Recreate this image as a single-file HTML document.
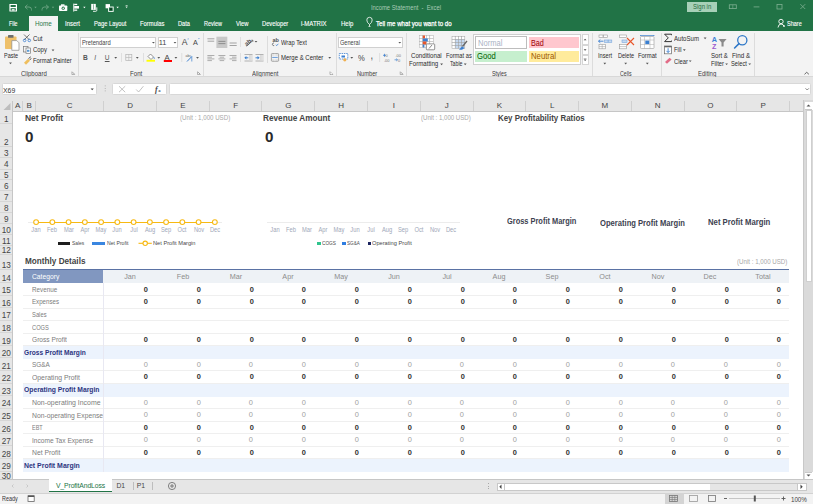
<!DOCTYPE html><html><head><meta charset="utf-8"><style>
*{margin:0;padding:0;box-sizing:border-box}
html,body{width:813px;height:504px;overflow:hidden;background:#fff;font-family:"Liberation Sans",sans-serif}
.ab{position:absolute}
.t{position:absolute;white-space:nowrap;line-height:1}
svg{position:absolute;overflow:visible}
</style></head><body>
<div class="ab" style="left:0px;top:0px;width:813px;height:31px;background:#217346"></div>
<div class="ab" style="left:29px;top:16px;width:29.2px;height:15px;background:#f3f3f3"></div>
<div class="t" style="left:8.80px;top:21.06px;font-size:6.9px;color:#ffffff;transform:scaleX(0.773);transform-origin:0 0;-webkit-text-stroke:0.12px #fff;">File</div>
<div class="t" style="left:34.90px;top:21.06px;font-size:6.9px;color:#2a7a4d;transform:scaleX(0.918);transform-origin:0 0;">Home</div>
<div class="t" style="left:64.80px;top:21.06px;font-size:6.9px;color:#ffffff;transform:scaleX(0.864);transform-origin:0 0;-webkit-text-stroke:0.12px #fff;">Insert</div>
<div class="t" style="left:93.90px;top:21.06px;font-size:6.9px;color:#ffffff;transform:scaleX(0.834);transform-origin:0 0;-webkit-text-stroke:0.12px #fff;">Page Layout</div>
<div class="t" style="left:139.60px;top:21.06px;font-size:6.9px;color:#ffffff;transform:scaleX(0.849);transform-origin:0 0;-webkit-text-stroke:0.12px #fff;">Formulas</div>
<div class="t" style="left:177.80px;top:21.06px;font-size:6.9px;color:#ffffff;transform:scaleX(0.823);transform-origin:0 0;-webkit-text-stroke:0.12px #fff;">Data</div>
<div class="t" style="left:203.60px;top:21.06px;font-size:6.9px;color:#ffffff;transform:scaleX(0.799);transform-origin:0 0;-webkit-text-stroke:0.12px #fff;">Review</div>
<div class="t" style="left:235.50px;top:21.06px;font-size:6.9px;color:#ffffff;transform:scaleX(0.842);transform-origin:0 0;-webkit-text-stroke:0.12px #fff;">View</div>
<div class="t" style="left:262.00px;top:21.06px;font-size:6.9px;color:#ffffff;transform:scaleX(0.836);transform-origin:0 0;-webkit-text-stroke:0.12px #fff;">Developer</div>
<div class="t" style="left:301.30px;top:21.06px;font-size:6.9px;color:#ffffff;transform:scaleX(0.871);transform-origin:0 0;-webkit-text-stroke:0.12px #fff;">i-MATRIX</div>
<div class="t" style="left:340.70px;top:21.06px;font-size:6.9px;color:#ffffff;transform:scaleX(0.866);transform-origin:0 0;-webkit-text-stroke:0.12px #fff;">Help</div>
<div class="t" style="left:375.60px;top:21.06px;font-size:6.9px;color:#ffffff;transform:scaleX(0.890);transform-origin:0 0;-webkit-text-stroke:0.25px #fff;">Tell me what you want to do</div>
<div class="t" style="left:787.20px;top:21.16px;font-size:6.9px;color:#ffffff;transform:scaleX(0.799);transform-origin:0 0;-webkit-text-stroke:0.12px #fff;">Share</div>
<div class="t" style="left:370.60px;top:4.56px;font-size:6.9px;color:#a8cbb6;transform:scaleX(0.846);transform-origin:0 0;">Income Statement&nbsp;&nbsp;-&nbsp;&nbsp;Excel</div>
<div class="ab" style="left:687.4px;top:2px;width:29.4px;height:9.8px;background:#a7d0b8"></div>
<div class="t" style="left:692.80px;top:4.26px;font-size:6.9px;color:#1f6b40;transform:scaleX(0.867);transform-origin:0 0;">Sign in</div>
<svg style="left:0;top:0" width="813" height="32"><rect x="9.4" y="3.9" width="7.6" height="7.6" rx="0.5" fill="#fff"/><rect x="10.6" y="5" width="5.2" height="2" fill="#217346"/><rect x="10.6" y="8.2" width="5.2" height="2.4" fill="#217346"/><rect x="11.8" y="9.2" width="2.8" height="1.4" fill="#fff"/><path d="M25,7 L27.5,4.8 M25,7 L27.5,9.2 M25,7 H29 Q31.5,7 31.5,9.5 V10.5" fill="none" stroke="#6fa686" stroke-width="0.9"/><polygon points="34.3,6.8 36.7,6.8 35.5,8.3" fill="#6fa686"/><path d="M48.5,7 L46,4.8 M48.5,7 L46,9.2 M48.5,7 H44.5 Q42,7 42,9.5 V10.5" fill="none" stroke="#6fa686" stroke-width="0.9"/><polygon points="51.8,6.8 54.2,6.8 53,8.3" fill="#6fa686"/><rect x="59" y="5.5" width="8.3" height="5.5" rx="0.8" fill="#fff"/><rect x="61" y="4.3" width="3.5" height="1.6" fill="#fff"/><circle cx="63.2" cy="8.2" r="1.6" fill="#217346"/><circle cx="63.2" cy="8.2" r="0.8" fill="#fff"/><rect x="73.3" y="3.6" width="0.9" height="8" fill="#fff"/><rect x="74.2" y="3.8" width="3" height="1.3" fill="#fff"/><rect x="74.2" y="6" width="4.8" height="2.6" fill="#fff"/><rect x="74.2" y="9.5" width="3" height="1.3" fill="#fff"/><polygon points="83.2,6.8 85.6,6.8 84.4,8.3" fill="#fff"/><rect x="91.2" y="3.9" width="4.6" height="6" fill="#fff"/><line x1="93.5" y1="4.3" x2="93.5" y2="9.5" stroke="#217346" stroke-width="0.5"/><path d="M96.8,7.3 V10.3 Q96.8,11.3 95.8,11.3 H93" fill="none" stroke="#fff" stroke-width="0.9"/><rect x="105.6" y="4.1" width="4.4" height="4.2" fill="#fff"/><rect x="108.6" y="7" width="4.6" height="4.4" fill="#217346" stroke="#fff" stroke-width="0.9"/><rect x="109.8" y="8.2" width="2.2" height="2" fill="#0b3d20"/><polygon points="116.4,6.8 118.8,6.8 117.6,8.3" fill="#fff"/><rect x="125.6" y="5.2" width="2" height="0.7" fill="#d8e9de"/><polygon points="125.4,6.6 127.8,6.6 126.6,8.3" fill="#d8e9de"/><rect x="729.3" y="4.8" width="7" height="3.8" fill="none" stroke="#7fb092" stroke-width="0.8"/><line x1="732.8" y1="4.8" x2="732.8" y2="8.6" stroke="#7fb092" stroke-width="0.6"/><line x1="753.6" y1="6.9" x2="759.4" y2="6.9" stroke="#7fb092" stroke-width="0.8"/><rect x="777" y="4.4" width="5" height="4.6" fill="none" stroke="#7fb092" stroke-width="0.8"/><path d="M800.4,4.2 L805.2,9 M805.2,4.2 L800.4,9" stroke="#7fb092" stroke-width="0.8"/><path d="M369.5,26 V24.5 Q366.8,22.5 366.8,20 A2.7,2.7 0 0 1 372.2,20 Q372.2,22.5 369.5,24.5" fill="none" stroke="#fff" stroke-width="0.8"/><line x1="368.5" y1="26.5" x2="370.5" y2="26.5" stroke="#fff" stroke-width="0.7"/><circle cx="781" cy="21.5" r="2.2" fill="none" stroke="#fff" stroke-width="0.9"/><path d="M778,27.5 Q778.5,24 781,24 Q783.5,24 784,26.5" fill="none" stroke="#fff" stroke-width="0.9"/><path d="M783,26 H785 M784,25 V27" stroke="#fff" stroke-width="0.7"/></svg>
<div class="ab" style="left:0px;top:31px;width:813px;height:46px;background:#f3f3f3"></div>
<div class="ab" style="left:0px;top:76.4px;width:813px;height:0.8px;background:#d8d8d8"></div>
<div class="ab" style="left:77.5px;top:33px;width:0.8px;height:43px;background:#dcdcdc"></div>
<div class="ab" style="left:203px;top:33px;width:0.8px;height:43px;background:#dcdcdc"></div>
<div class="ab" style="left:335.5px;top:33px;width:0.8px;height:43px;background:#dcdcdc"></div>
<div class="ab" style="left:406.4px;top:33px;width:0.8px;height:43px;background:#dcdcdc"></div>
<div class="ab" style="left:592.4px;top:33px;width:0.8px;height:43px;background:#dcdcdc"></div>
<div class="ab" style="left:660.7px;top:33px;width:0.8px;height:43px;background:#dcdcdc"></div>
<div class="ab" style="left:754.4px;top:33px;width:0.8px;height:43px;background:#dcdcdc"></div>
<div class="ab" style="left:267.3px;top:36px;width:0.7px;height:27px;background:#dcdcdc"></div>
<div class="t" style="left:20.80px;top:70.96px;font-size:6.9px;color:#3a3a3a;transform:scaleX(0.874);transform-origin:0 0;">Clipboard</div>
<div class="t" style="left:130.00px;top:70.96px;font-size:6.9px;color:#3a3a3a;transform:scaleX(0.891);transform-origin:0 0;">Font</div>
<div class="t" style="left:252.00px;top:70.96px;font-size:6.9px;color:#3a3a3a;transform:scaleX(0.860);transform-origin:0 0;">Alignment</div>
<div class="t" style="left:356.80px;top:70.96px;font-size:6.9px;color:#3a3a3a;transform:scaleX(0.827);transform-origin:0 0;">Number</div>
<div class="t" style="left:491.50px;top:70.96px;font-size:6.9px;color:#3a3a3a;transform:scaleX(0.783);transform-origin:0 0;">Styles</div>
<div class="t" style="left:620.20px;top:70.96px;font-size:6.9px;color:#3a3a3a;transform:scaleX(0.756);transform-origin:0 0;">Cells</div>
<div class="t" style="left:698.20px;top:70.96px;font-size:6.9px;color:#3a3a3a;transform:scaleX(0.867);transform-origin:0 0;">Editing</div>
<div class="t" style="left:4.00px;top:52.76px;font-size:6.9px;color:#2b2b2b;transform:scaleX(0.793);transform-origin:0 0;">Paste</div>
<div class="t" style="left:32.70px;top:35.66px;font-size:6.9px;color:#2b2b2b;transform:scaleX(0.885);transform-origin:0 0;">Cut</div>
<div class="t" style="left:32.70px;top:46.56px;font-size:6.9px;color:#2b2b2b;transform:scaleX(0.863);transform-origin:0 0;">Copy</div>
<div class="t" style="left:32.70px;top:58.26px;font-size:6.9px;color:#2b2b2b;transform:scaleX(0.848);transform-origin:0 0;">Format Painter</div>
<div class="ab" style="left:80px;top:37px;width:76.4px;height:11px;background:#fff;border:0.8px solid #d0d0d0"></div>
<div class="ab" style="left:157.7px;top:37px;width:20.5px;height:11px;background:#fff;border:0.8px solid #d0d0d0"></div>
<div class="t" style="left:81.50px;top:39.76px;font-size:6.9px;color:#444;transform:scaleX(0.841);transform-origin:0 0;">Pretendard</div>
<div class="t" style="left:158.80px;top:39.34px;font-size:7.4px;color:#444;">11</div>
<div class="ab" style="left:338.4px;top:37px;width:65px;height:11px;background:#fff;border:0.8px solid #d0d0d0"></div>
<div class="t" style="left:339.90px;top:39.76px;font-size:6.9px;color:#444;transform:scaleX(0.811);transform-origin:0 0;">General</div>
<div class="t" style="left:82.90px;top:55.01px;font-size:6.6px;color:#555;font-weight:bold;">B</div>
<div class="t" style="left:94.30px;top:55.01px;font-size:6.6px;color:#555;font-style:italic;">I</div>
<div class="t" style="left:104.80px;top:55.01px;font-size:6.6px;color:#555;text-decoration:underline;">U</div>
<div class="t" style="left:357.60px;top:54.01px;font-size:9.2px;color:#444;transform:scaleX(0.830);transform-origin:0 0;">%</div>
<div class="t" style="left:370.60px;top:52.48px;font-size:9px;color:#444;font-weight:bold;transform:scaleX(0.641);transform-origin:0 0;">,</div>
<div class="t" style="left:280.90px;top:39.86px;font-size:6.9px;color:#2b2b2b;transform:scaleX(0.837);transform-origin:0 0;">Wrap Text</div>
<div class="t" style="left:280.90px;top:55.26px;font-size:6.9px;color:#2b2b2b;transform:scaleX(0.870);transform-origin:0 0;">Merge &amp; Center</div>
<div class="t" style="left:410.90px;top:52.76px;font-size:6.9px;color:#2b2b2b;transform:scaleX(0.889);transform-origin:0 0;">Conditional</div>
<div class="t" style="left:409.40px;top:61.16px;font-size:6.9px;color:#2b2b2b;transform:scaleX(0.888);transform-origin:0 0;">Formatting</div>
<div class="t" style="left:445.60px;top:52.76px;font-size:6.9px;color:#2b2b2b;transform:scaleX(0.831);transform-origin:0 0;">Format as</div>
<div class="t" style="left:450.00px;top:61.16px;font-size:6.9px;color:#2b2b2b;transform:scaleX(0.758);transform-origin:0 0;">Table</div>
<div class="ab" style="left:473.3px;top:34.2px;width:108.2px;height:30.7px;background:#fff;border:0.8px solid #cfcfcf"></div>
<div class="ab" style="left:474.5px;top:36.3px;width:52.3px;height:12.8px;background:#fff;border:1.5px solid #bdbdbd"></div>
<div class="ab" style="left:529px;top:37px;width:50.3px;height:11.2px;background:#ffc7ce"></div>
<div class="ab" style="left:475px;top:51.3px;width:51.5px;height:10.6px;background:#c6efce"></div>
<div class="ab" style="left:529px;top:51.3px;width:50.3px;height:10.6px;background:#ffeb9c"></div>
<div class="ab" style="left:581.6px;top:34.2px;width:7px;height:10.4px;background:#fff;border:0.8px solid #d6d6d6"></div>
<div class="ab" style="left:581.6px;top:44.6px;width:7px;height:10px;background:#fff;border:0.8px solid #d6d6d6"></div>
<div class="ab" style="left:581.6px;top:54.6px;width:7px;height:10.3px;background:#fff;border:0.8px solid #d6d6d6"></div>
<div class="t" style="left:478.00px;top:38.72px;font-size:8.6px;color:#aab3c5;transform:scaleX(0.880);transform-origin:0 0;">Normal</div>
<div class="t" style="left:531.00px;top:38.72px;font-size:8.6px;color:#9c0006;transform:scaleX(0.843);transform-origin:0 0;">Bad</div>
<div class="t" style="left:477.40px;top:52.32px;font-size:8.6px;color:#006100;transform:scaleX(0.893);transform-origin:0 0;">Good</div>
<div class="t" style="left:531.00px;top:52.32px;font-size:8.6px;color:#9c5700;transform:scaleX(0.901);transform-origin:0 0;">Neutral</div>
<div class="t" style="left:597.90px;top:52.56px;font-size:6.9px;color:#2b2b2b;transform:scaleX(0.817);transform-origin:0 0;">Insert</div>
<div class="t" style="left:618.00px;top:52.56px;font-size:6.9px;color:#2b2b2b;transform:scaleX(0.807);transform-origin:0 0;">Delete</div>
<div class="t" style="left:638.00px;top:52.56px;font-size:6.9px;color:#2b2b2b;transform:scaleX(0.851);transform-origin:0 0;">Format</div>
<div class="t" style="left:673.80px;top:36.16px;font-size:6.9px;color:#2b2b2b;transform:scaleX(0.881);transform-origin:0 0;">AutoSum</div>
<div class="t" style="left:673.80px;top:47.36px;font-size:6.9px;color:#2b2b2b;transform:scaleX(0.851);transform-origin:0 0;">Fill</div>
<div class="t" style="left:673.80px;top:59.16px;font-size:6.9px;color:#2b2b2b;transform:scaleX(0.843);transform-origin:0 0;">Clear</div>
<div class="t" style="left:711.00px;top:52.76px;font-size:6.9px;color:#2b2b2b;transform:scaleX(0.881);transform-origin:0 0;">Sort &amp;</div>
<div class="t" style="left:711.00px;top:60.96px;font-size:6.9px;color:#2b2b2b;transform:scaleX(0.848);transform-origin:0 0;">Filter</div>
<div class="t" style="left:732.00px;top:52.86px;font-size:6.9px;color:#2b2b2b;transform:scaleX(0.908);transform-origin:0 0;">Find &amp;</div>
<div class="t" style="left:731.30px;top:60.96px;font-size:6.9px;color:#2b2b2b;transform:scaleX(0.829);transform-origin:0 0;">Select</div>
<div class="ab" style="left:0px;top:77.2px;width:813px;height:23px;background:#e6e6e6"></div>
<div class="ab" style="left:2px;top:83.2px;width:95px;height:12.2px;background:#fff;border-radius:1.5px;border:0.8px solid #d8d8d8"></div>
<div class="ab" style="left:112.3px;top:83.2px;width:55px;height:12.2px;background:#fff;border-radius:1.5px;border:0.8px solid #d8d8d8"></div>
<div class="ab" style="left:169.4px;top:83.2px;width:642px;height:12.2px;background:#fff;border-radius:1.5px;border:0.8px solid #d8d8d8"></div>
<div class="t" style="left:3.30px;top:87.01px;font-size:7.2px;color:#333;transform:scaleX(0.960);transform-origin:0 0;">X69</div>
<svg style="left:0;top:0" width="813" height="100"><rect x="5" y="36.5" width="11.5" height="12.5" rx="0.8" fill="#eec06a"/><rect x="8" y="35" width="5.5" height="2.8" rx="0.6" fill="#6d6d6d"/><path d="M11.8,40.6 H16.8 L19,42.8 V50.3 H11.8 Z" fill="#fff" stroke="#8a8a8a" stroke-width="0.7"/><polygon points="9.10,62.60 11.90,62.60 10.50,64.20" fill="#555"/><path d="M24,34.5 L29.5,40 M29.5,34.5 L24,40" stroke="#555" stroke-width="0.8"/><circle cx="24.6" cy="40.4" r="1.3" fill="none" stroke="#3b7fd0" stroke-width="0.8"/><circle cx="29.3" cy="40.4" r="1.3" fill="none" stroke="#3b7fd0" stroke-width="0.8"/><rect x="23.5" y="46.5" width="4.5" height="5.5" fill="#f3f3f3" stroke="#777" stroke-width="0.7"/><rect x="26" y="48" width="4.5" height="5.3" fill="#fff" stroke="#777" stroke-width="0.7"/><rect x="27" y="49.8" width="2.4" height="2" fill="#5b9bd5"/><polygon points="51.60,49.60 54.40,49.60 53.00,51.20" fill="#555"/><path d="M24,62.8 L28,58.8 L30,60.8 L26,64.8 Z" fill="#efbf5e"/><path d="M28.5,58.5 L30.8,56.8 M29.8,60 L31.2,58.3" stroke="#444" stroke-width="0.9"/><path d="M71.9,71.5 V74.5 H74.9" fill="none" stroke="#888" stroke-width="0.6"/><path d="M72.60000000000001,72.2 L74.60000000000001,74.2" stroke="#666" stroke-width="0.6"/><path d="M197.5,71.5 V74.5 H200.5" fill="none" stroke="#888" stroke-width="0.6"/><path d="M198.2,72.2 L200.2,74.2" stroke="#666" stroke-width="0.6"/><path d="M330.0,71.5 V74.5 H333.0" fill="none" stroke="#888" stroke-width="0.6"/><path d="M330.7,72.2 L332.7,74.2" stroke="#666" stroke-width="0.6"/><path d="M400.2,71.5 V74.5 H403.2" fill="none" stroke="#888" stroke-width="0.6"/><path d="M400.9,72.2 L402.9,74.2" stroke="#666" stroke-width="0.6"/><polygon points="152.00,41.90 154.80,41.90 153.40,43.50" fill="#555"/><polygon points="173.60,41.90 176.40,41.90 175.00,43.50" fill="#555"/><text x="181.7" y="45.4" font-family="Liberation Sans" font-size="8.6" fill="#444">A</text><polygon points="187.4,39.3 188.9,39.3 188.15,38.2" fill="#3b7fd0"/><text x="193" y="45.4" font-family="Liberation Sans" font-size="7.2" fill="#444">A</text><polygon points="198.2,38.2 199.7,38.2 198.95,39.3" fill="#3b7fd0"/><polygon points="114.30,57.10 117.10,57.10 115.70,58.70" fill="#555"/><rect x="121.3" y="53" width="0.7" height="9" fill="#d6d6d6"/><rect x="143" y="53" width="0.7" height="9" fill="#d6d6d6"/><rect x="181.5" y="53" width="0.7" height="9" fill="#d6d6d6"/><rect x="125.8" y="54.5" width="6" height="6" fill="none" stroke="#b4b4b4" stroke-width="0.7"/><line x1="128.8" y1="54.5" x2="128.8" y2="60.5" stroke="#b4b4b4" stroke-width="0.6"/><line x1="125.8" y1="57.5" x2="131.8" y2="57.5" stroke="#b4b4b4" stroke-width="0.6"/><polygon points="135.90,57.10 138.70,57.10 137.30,58.70" fill="#555"/><path d="M148,56.5 L150.5,54 L153.5,57 L151,59.5 Z" fill="#fff" stroke="#666" stroke-width="0.7"/><path d="M153.5,57 L155,58 L154,59" fill="#3b7fd0"/><rect x="146.5" y="59.8" width="8.5" height="1.9" fill="#ffff00"/><polygon points="157.40,57.10 160.20,57.10 158.80,58.70" fill="#555"/><text x="164.6" y="59.6" font-family="Liberation Sans" font-size="7.6" fill="#444">A</text><rect x="163.8" y="60" width="8.2" height="2" fill="#ff0000"/><polygon points="174.50,57.10 177.30,57.10 175.90,58.70" fill="#555"/><text x="185.6" y="56.5" font-family="Liberation Sans" font-size="3.6" fill="#666">abc</text><path d="M187,61.5 L191.8,56.5" stroke="#3b7fd0" stroke-width="1"/><path d="M191.8,56.5 V61.5" stroke="#3b7fd0" stroke-width="0.7"/><polygon points="196.10,57.10 198.90,57.10 197.50,58.70" fill="#555"/><rect x="216.4" y="36.7" width="10.9" height="11.3" fill="#c8c8c8"/><path d="M207.4,38.8 H214.4 M207.6,41.2 H214.2" stroke="#9a9a9a" stroke-width="0.9"/><path d="M218.4,41.4 H225.4 M218.4,43.6 H225.4" stroke="#888" stroke-width="0.9"/><path d="M229.6,43 H236.7 M229.6,45.5 H236.7" stroke="#9a9a9a" stroke-width="0.9"/><rect x="240" y="37" width="0.7" height="10" fill="#d6d6d6"/><rect x="240" y="53" width="0.7" height="9" fill="#d6d6d6"/><text x="244.2" y="44.2" font-family="Liberation Sans" font-size="6" font-weight="bold" fill="#555" transform="rotate(-40 248 42)">ab</text><path d="M246.5,46.2 L252.8,40.5" stroke="#555" stroke-width="0.8"/><path d="M251,40.3 L253,40.2 L252.8,42" fill="none" stroke="#555" stroke-width="0.6"/><polygon points="254.60,41.00 257.40,41.00 256.00,42.60" fill="#555"/><line x1="207.4" y1="55.5" x2="214.4" y2="55.5" stroke="#9a9a9a" stroke-width="0.8"/><line x1="207.4" y1="57.2" x2="211.9" y2="57.2" stroke="#9a9a9a" stroke-width="0.8"/><line x1="207.4" y1="58.9" x2="214.4" y2="58.9" stroke="#9a9a9a" stroke-width="0.8"/><line x1="207.4" y1="60.6" x2="211.9" y2="60.6" stroke="#9a9a9a" stroke-width="0.8"/><line x1="218.4" y1="55.5" x2="225.4" y2="55.5" stroke="#9a9a9a" stroke-width="0.8"/><line x1="219.65" y1="57.2" x2="224.15" y2="57.2" stroke="#9a9a9a" stroke-width="0.8"/><line x1="218.4" y1="58.9" x2="225.4" y2="58.9" stroke="#9a9a9a" stroke-width="0.8"/><line x1="219.65" y1="60.6" x2="224.15" y2="60.6" stroke="#9a9a9a" stroke-width="0.8"/><line x1="229.5" y1="55.5" x2="236.5" y2="55.5" stroke="#9a9a9a" stroke-width="0.8"/><line x1="232.0" y1="57.2" x2="236.5" y2="57.2" stroke="#9a9a9a" stroke-width="0.8"/><line x1="229.5" y1="58.9" x2="236.5" y2="58.9" stroke="#9a9a9a" stroke-width="0.8"/><line x1="232.0" y1="60.6" x2="236.5" y2="60.6" stroke="#9a9a9a" stroke-width="0.8"/><path d="M244.5,54.5 H252.5 M244.5,61 H252.5" stroke="#888" stroke-width="0.6"/><rect x="249" y="55" width="3.5" height="5.5" fill="#d8d8d8"/><path d="M250.2,55 V60.5 M251.4,55 V60.5" stroke="#eee" stroke-width="0.4"/><path d="M245,57.8 H248.3" stroke="#3b7fd0" stroke-width="1"/><polygon points="244.3,57.8 246.4,56 246.4,59.6" fill="#3b7fd0"/><path d="M255.5,54.5 H263.5 M255.5,61 H263.5" stroke="#888" stroke-width="0.6"/><rect x="260" y="55" width="3.5" height="5.5" fill="#d8d8d8"/><path d="M261.2,55 V60.5 M262.4,55 V60.5" stroke="#eee" stroke-width="0.4"/><path d="M255.5,57.8 H258.8" stroke="#3b7fd0" stroke-width="1"/><polygon points="259.6,57.8 257.5,56 257.5,59.6" fill="#3b7fd0"/><text x="272.4" y="41.6" font-family="Liberation Sans" font-size="5.6" font-weight="bold" fill="#555">ab</text><path d="M274,42.8 Q272,43.2 272.4,44.8 Q272.8,46 274.2,45.6" fill="none" stroke="#555" stroke-width="0.7"/><path d="M275.8,44.8 L276.8,45.6 L278.3,43.8" fill="none" stroke="#3b7fd0" stroke-width="0.8"/><rect x="271.4" y="53.5" width="7.2" height="7.8" rx="0.8" fill="#e4e4e4" stroke="#8a8a8a" stroke-width="0.7"/><rect x="272" y="56.3" width="6" height="2.2" fill="#fff"/><line x1="272.2" y1="57.4" x2="277.8" y2="57.4" stroke="#3b7fd0" stroke-width="0.8"/><line x1="274.9" y1="53.5" x2="274.9" y2="56.3" stroke="#fff" stroke-width="0.5"/><line x1="274.9" y1="58.5" x2="274.9" y2="61.3" stroke="#fff" stroke-width="0.5"/><polygon points="328.30,57.10 331.10,57.10 329.70,58.70" fill="#555"/><polygon points="330.10,72.80 332.90,72.80 331.50,74.40" fill="#f3f3f3"/><polygon points="398.40,41.90 401.20,41.90 399.80,43.50" fill="#555"/><rect x="339.3" y="53.5" width="8.5" height="5.5" fill="#fff" stroke="#3b7fd0" stroke-width="0.8" stroke-dasharray="1.5 0.8"/><circle cx="344.8" cy="59.8" r="1.6" fill="#f0b050"/><rect x="341.5" y="55.5" width="3.5" height="2" fill="#3b7fd0"/><polygon points="350.40,57.10 353.20,57.10 351.80,58.70" fill="#555"/><rect x="379.4" y="53" width="0.7" height="9" fill="#d6d6d6"/><text x="385.5" y="56.8" font-family="Liberation Sans" font-size="4" fill="#777">0</text><text x="384" y="61.5" font-family="Liberation Sans" font-size="4" fill="#777">.00</text><path d="M383,55.3 H386 M384.5,53.8 V56.8" stroke="#3b7fd0" stroke-width="0.8"/><text x="395.5" y="56.8" font-family="Liberation Sans" font-size="4" fill="#777">.00</text><text x="398" y="61.5" font-family="Liberation Sans" font-size="4" fill="#777">0</text><path d="M394.5,59.8 H397.5 M396.2,58.6 L397.5,59.8 L396.2,61" fill="none" stroke="#3b7fd0" stroke-width="0.7"/><rect x="419.30" y="35.50" width="3.5" height="3" fill="#fff" stroke="#b0b0b0" stroke-width="0.5"/><rect x="422.80" y="35.50" width="3.5" height="3" fill="#fff" stroke="#b0b0b0" stroke-width="0.5"/><rect x="426.30" y="35.50" width="3.5" height="3" fill="#fff" stroke="#b0b0b0" stroke-width="0.5"/><rect x="429.80" y="35.50" width="3.5" height="3" fill="#fff" stroke="#b0b0b0" stroke-width="0.5"/><rect x="419.30" y="38.50" width="3.5" height="3" fill="#fff" stroke="#b0b0b0" stroke-width="0.5"/><rect x="422.80" y="38.50" width="3.5" height="3" fill="#fff" stroke="#b0b0b0" stroke-width="0.5"/><rect x="426.30" y="38.50" width="3.5" height="3" fill="#fff" stroke="#b0b0b0" stroke-width="0.5"/><rect x="429.80" y="38.50" width="3.5" height="3" fill="#fff" stroke="#b0b0b0" stroke-width="0.5"/><rect x="419.30" y="41.50" width="3.5" height="3" fill="#fff" stroke="#b0b0b0" stroke-width="0.5"/><rect x="422.80" y="41.50" width="3.5" height="3" fill="#fff" stroke="#b0b0b0" stroke-width="0.5"/><rect x="426.30" y="41.50" width="3.5" height="3" fill="#fff" stroke="#b0b0b0" stroke-width="0.5"/><rect x="429.80" y="41.50" width="3.5" height="3" fill="#fff" stroke="#b0b0b0" stroke-width="0.5"/><rect x="419.30" y="44.50" width="3.5" height="3" fill="#fff" stroke="#b0b0b0" stroke-width="0.5"/><rect x="422.80" y="44.50" width="3.5" height="3" fill="#fff" stroke="#b0b0b0" stroke-width="0.5"/><rect x="426.30" y="44.50" width="3.5" height="3" fill="#fff" stroke="#b0b0b0" stroke-width="0.5"/><rect x="429.80" y="44.50" width="3.5" height="3" fill="#fff" stroke="#b0b0b0" stroke-width="0.5"/><rect x="422.8" y="35.5" width="2.2" height="3" fill="#e8562a"/><rect x="422.8" y="38.5" width="5" height="3" fill="#3b7fd0"/><rect x="422.8" y="41.5" width="3.5" height="3" fill="#e8562a"/><rect x="422.8" y="44.5" width="1.6" height="3" fill="#3b7fd0"/><rect x="426.3" y="43.9" width="8.4" height="5.9" rx="0.8" fill="#fff" stroke="#777" stroke-width="0.8"/><path d="M429,48.5 L432,45" stroke="#555" stroke-width="0.7"/><polygon points="440.20,63.60 443.00,63.60 441.60,65.20" fill="#555"/><rect x="452.00" y="36.40" width="3.2" height="3" fill="#fff" stroke="#a0a0a0" stroke-width="0.5"/><rect x="455.20" y="36.40" width="3.2" height="3" fill="#fff" stroke="#a0a0a0" stroke-width="0.5"/><rect x="458.40" y="36.40" width="3.2" height="3" fill="#fff" stroke="#a0a0a0" stroke-width="0.5"/><rect x="461.60" y="36.40" width="3.2" height="3" fill="#fff" stroke="#a0a0a0" stroke-width="0.5"/><rect x="452.00" y="39.40" width="3.2" height="3" fill="#fff" stroke="#a0a0a0" stroke-width="0.5"/><rect x="455.20" y="39.40" width="3.2" height="3" fill="#c5d9f1" stroke="#a0a0a0" stroke-width="0.5"/><rect x="458.40" y="39.40" width="3.2" height="3" fill="#c5d9f1" stroke="#a0a0a0" stroke-width="0.5"/><rect x="461.60" y="39.40" width="3.2" height="3" fill="#c5d9f1" stroke="#a0a0a0" stroke-width="0.5"/><rect x="452.00" y="42.40" width="3.2" height="3" fill="#fff" stroke="#a0a0a0" stroke-width="0.5"/><rect x="455.20" y="42.40" width="3.2" height="3" fill="#c5d9f1" stroke="#a0a0a0" stroke-width="0.5"/><rect x="458.40" y="42.40" width="3.2" height="3" fill="#c5d9f1" stroke="#a0a0a0" stroke-width="0.5"/><rect x="461.60" y="42.40" width="3.2" height="3" fill="#c5d9f1" stroke="#a0a0a0" stroke-width="0.5"/><rect x="452.00" y="45.40" width="3.2" height="3" fill="#fff" stroke="#a0a0a0" stroke-width="0.5"/><rect x="455.20" y="45.40" width="3.2" height="3" fill="#c5d9f1" stroke="#a0a0a0" stroke-width="0.5"/><rect x="458.40" y="45.40" width="3.2" height="3" fill="#c5d9f1" stroke="#a0a0a0" stroke-width="0.5"/><rect x="461.60" y="45.40" width="3.2" height="3" fill="#c5d9f1" stroke="#a0a0a0" stroke-width="0.5"/><path d="M459,49.8 L462,46.5 L464.5,48 L462,49.8 Z" fill="#3b7fd0"/><path d="M462.5,46.5 L467,41" stroke="#666" stroke-width="1.3"/><polygon points="463.80,63.60 466.60,63.60 465.20,65.20" fill="#555"/><polygon points="583.7,40.2 586.5,40.2 585.1,38.8" fill="#444"/><polygon points="583.7,49.3 586.5,49.3 585.1,50.7" fill="#444"/><line x1="583.7" y1="58.6" x2="586.5" y2="58.6" stroke="#777" stroke-width="0.5"/><polygon points="583.7,59.6 586.5,59.6 585.1,61" fill="#444"/><rect x="599" y="35" width="4" height="2.4" fill="#fff" stroke="#999" stroke-width="0.6"/><rect x="603.5" y="35" width="4" height="2.4" fill="#fff" stroke="#999" stroke-width="0.6"/><rect x="604.5" y="40" width="3.6" height="2.4" fill="#c5d9f1" stroke="#7aa7dc" stroke-width="0.6"/><rect x="608.2" y="40" width="3.6" height="2.4" fill="#c5d9f1" stroke="#7aa7dc" stroke-width="0.6"/><path d="M598.5,41.2 H603.5 M598.5,41.2 L600.3,39.6 M598.5,41.2 L600.3,42.8" stroke="#3b7fd0" stroke-width="0.9" fill="none"/><rect x="599" y="44.5" width="6.5" height="4.3" fill="#fff" stroke="#999" stroke-width="0.6"/><line x1="602.2" y1="44.5" x2="602.2" y2="48.8" stroke="#999" stroke-width="0.5"/><line x1="599" y1="46.6" x2="605.5" y2="46.6" stroke="#999" stroke-width="0.5"/><polygon points="603.40,62.80 606.20,62.80 604.80,64.40" fill="#555"/><rect x="619.3" y="35" width="7" height="2.4" fill="#fff" stroke="#999" stroke-width="0.6"/><rect x="622" y="40" width="5" height="2.4" fill="#c5d9f1" stroke="#7aa7dc" stroke-width="0.6"/><rect x="619.3" y="44.5" width="7" height="4.3" fill="#fff" stroke="#999" stroke-width="0.6"/><line x1="619.3" y1="46.6" x2="626.3" y2="46.6" stroke="#999" stroke-width="0.5"/><path d="M627,38 L634,45 M634,38 L627,45" stroke="#e8562a" stroke-width="1.1"/><polygon points="624.30,62.80 627.10,62.80 625.70,64.40" fill="#555"/><rect x="640.5" y="36.5" width="13.5" height="12" rx="0.8" fill="#fff" stroke="#999" stroke-width="0.6"/><line x1="640.5" y1="40" x2="654" y2="40" stroke="#aaa" stroke-width="0.5"/><line x1="640.5" y1="44.5" x2="654" y2="44.5" stroke="#aaa" stroke-width="0.5"/><line x1="644.5" y1="36.5" x2="644.5" y2="48.5" stroke="#aaa" stroke-width="0.5"/><line x1="650" y1="36.5" x2="650" y2="48.5" stroke="#aaa" stroke-width="0.5"/><rect x="645.3" y="40.6" width="4" height="3.5" fill="#3b7fd0"/><path d="M640.5,35.5 H654 M640.5,35 V36 M654,35 V36" stroke="#3b7fd0" stroke-width="0.7"/><polygon points="645.90,62.80 648.70,62.80 647.30,64.40" fill="#555"/><path d="M671.5,35.2 V34.2 H664.6 L668.3,37.9 L664.6,41.6 H671.5 V40.6" fill="none" stroke="#333" stroke-width="1"/><polygon points="703.70,37.60 706.50,37.60 705.10,39.20" fill="#555"/><rect x="664.6" y="46" width="7" height="7.8" fill="#fff" stroke="#666" stroke-width="0.7"/><rect x="664.6" y="46" width="7" height="1.3" fill="#666"/><path d="M668.1,48.2 V52.5 M666.4,50.8 L668.1,52.5 L669.8,50.8" fill="none" stroke="#3b7fd0" stroke-width="0.9"/><polygon points="682.90,49.30 685.70,49.30 684.30,50.90" fill="#555"/><path d="M665,62 L669.5,57.8 L671.6,59.6 L667,63.8 Z" fill="#e26d88"/><polygon points="688.80,60.50 691.60,60.50 690.20,62.10" fill="#555"/><text x="711.7" y="41.8" font-family="Liberation Sans" font-size="7.2" font-weight="bold" fill="#3b82d6">A</text><text x="712" y="48.9" font-family="Liberation Sans" font-size="7.2" font-weight="bold" fill="#9b59d0">Z</text><path d="M718.5,38.9 H726.6 L723.6,42.4 V46.4 H721.5 V42.4 Z" fill="#8a8a8a"/><polygon points="725.20,63.50 728.00,63.50 726.60,65.10" fill="#555"/><circle cx="742.3" cy="40.3" r="4.6" fill="none" stroke="#2f78c8" stroke-width="1.3"/><path d="M739,43.6 L734.6,48" stroke="#2f78c8" stroke-width="1.6" stroke-linecap="round"/><polygon points="748.30,63.50 751.10,63.50 749.70,65.10" fill="#555"/><path d="M804.5,74.3 L806.7,72.3 L808.9,74.3" fill="none" stroke="#444" stroke-width="0.8"/><polygon points="90.6,88.4 93.8,88.4 92.2,90.2" fill="#444"/><rect x="104.8" y="85.5" width="0.8" height="0.8" fill="#999"/><rect x="104.8" y="88" width="0.8" height="0.8" fill="#999"/><rect x="104.8" y="90.5" width="0.8" height="0.8" fill="#999"/><path d="M119,86.2 L125.2,92.2 M125.2,86.2 L119,92.2" stroke="#a8a8a8" stroke-width="0.7"/><path d="M136.2,89.5 L138.6,92 L143.4,86.2" fill="none" stroke="#a8a8a8" stroke-width="0.7"/><text x="155" y="92" font-family="Liberation Serif" font-size="7.8" font-style="italic" font-weight="bold" fill="#444">f</text><text x="158.3" y="92.3" font-family="Liberation Serif" font-size="5" font-style="italic" font-weight="bold" fill="#444">x</text><path d="M805.5,88.3 L807.2,90 L808.9,88.3" fill="none" stroke="#555" stroke-width="0.7"/></svg>
<div class="ab" style="left:0px;top:100px;width:805px;height:379px;background:#e6e6e6"></div>
<div class="ab" style="left:13px;top:111.5px;width:790px;height:367.5px;background:#fff"></div>
<div class="ab" style="left:803px;top:100px;width:1px;height:379px;background:#c8c8c8"></div>
<div class="ab" style="left:804px;top:100px;width:9px;height:379px;background:#e6e6e6"></div>
<div class="ab" style="left:804px;top:100px;width:9px;height:379px;background:#dadada"></div>
<div class="ab" style="left:805px;top:102px;width:7.5px;height:7.5px;background:#fff"></div>
<div class="ab" style="left:805.5px;top:110px;width:6.5px;height:172px;background:#fff;border:0.8px solid #cfcfcf"></div>
<div class="ab" style="left:805px;top:472px;width:7.5px;height:7px;background:#fff"></div>
<div class="ab" style="left:805px;top:109px;width:7px;height:1px;background:#c8c8c8"></div>
<svg style="left:805px;top:102px" width="7" height="7"><polygon points="1.5,4.5 3.5,2.5 5.5,4.5" fill="#555"/></svg>
<div class="ab" style="left:805px;top:472px;width:7px;height:1px;background:#c8c8c8"></div>
<svg style="left:805px;top:472px" width="7" height="7"><polygon points="1.5,2.5 3.5,4.5 5.5,2.5" fill="#555"/></svg>
<div class="ab" style="left:22px;top:101px;width:1px;height:10px;background:#d0d0d0"></div>
<div class="t" style="left:-132.45px;width:300px;text-align:center;top:102.43px;font-size:8px;color:#444;">A</div>
<div class="ab" style="left:35px;top:101px;width:1px;height:10px;background:#d0d0d0"></div>
<div class="t" style="left:-120.90px;width:300px;text-align:center;top:102.43px;font-size:8px;color:#444;">B</div>
<div class="ab" style="left:103px;top:101px;width:1px;height:10px;background:#d0d0d0"></div>
<div class="t" style="left:-80.35px;width:300px;text-align:center;top:102.43px;font-size:8px;color:#444;">C</div>
<div class="ab" style="left:156px;top:101px;width:1px;height:10px;background:#d0d0d0"></div>
<div class="t" style="left:-19.92px;width:300px;text-align:center;top:102.43px;font-size:8px;color:#444;">D</div>
<div class="ab" style="left:209px;top:101px;width:1px;height:10px;background:#d0d0d0"></div>
<div class="t" style="left:32.84px;width:300px;text-align:center;top:102.43px;font-size:8px;color:#444;">E</div>
<div class="ab" style="left:261px;top:101px;width:1px;height:10px;background:#d0d0d0"></div>
<div class="t" style="left:85.60px;width:300px;text-align:center;top:102.43px;font-size:8px;color:#444;">F</div>
<div class="ab" style="left:314px;top:101px;width:1px;height:10px;background:#d0d0d0"></div>
<div class="t" style="left:138.36px;width:300px;text-align:center;top:102.43px;font-size:8px;color:#444;">G</div>
<div class="ab" style="left:367px;top:101px;width:1px;height:10px;background:#d0d0d0"></div>
<div class="t" style="left:191.12px;width:300px;text-align:center;top:102.43px;font-size:8px;color:#444;">H</div>
<div class="ab" style="left:420px;top:101px;width:1px;height:10px;background:#d0d0d0"></div>
<div class="t" style="left:243.88px;width:300px;text-align:center;top:102.43px;font-size:8px;color:#444;">I</div>
<div class="ab" style="left:473px;top:101px;width:1px;height:10px;background:#d0d0d0"></div>
<div class="t" style="left:296.64px;width:300px;text-align:center;top:102.43px;font-size:8px;color:#444;">J</div>
<div class="ab" style="left:525px;top:101px;width:1px;height:10px;background:#d0d0d0"></div>
<div class="t" style="left:349.40px;width:300px;text-align:center;top:102.43px;font-size:8px;color:#444;">K</div>
<div class="ab" style="left:578px;top:101px;width:1px;height:10px;background:#d0d0d0"></div>
<div class="t" style="left:402.16px;width:300px;text-align:center;top:102.43px;font-size:8px;color:#444;">L</div>
<div class="ab" style="left:631px;top:101px;width:1px;height:10px;background:#d0d0d0"></div>
<div class="t" style="left:454.92px;width:300px;text-align:center;top:102.43px;font-size:8px;color:#444;">M</div>
<div class="ab" style="left:684px;top:101px;width:1px;height:10px;background:#d0d0d0"></div>
<div class="t" style="left:507.68px;width:300px;text-align:center;top:102.43px;font-size:8px;color:#444;">N</div>
<div class="ab" style="left:736px;top:101px;width:1px;height:10px;background:#d0d0d0"></div>
<div class="t" style="left:560.44px;width:300px;text-align:center;top:102.43px;font-size:8px;color:#444;">O</div>
<div class="ab" style="left:789px;top:101px;width:1px;height:10px;background:#d0d0d0"></div>
<div class="t" style="left:613.20px;width:300px;text-align:center;top:102.43px;font-size:8px;color:#444;">P</div>
<div class="ab" style="left:13px;top:111px;width:790px;height:1px;background:#c6c6c6"></div>
<div class="ab" style="left:12px;top:101px;width:1px;height:378px;background:#c6c6c6"></div>
<svg style="left:0;top:100px" width="13" height="11"><polygon points="10.5,3 10.5,10 3.5,10" fill="#bdbdbd"/></svg>
<div class="ab" style="left:0px;top:123px;width:12px;height:1px;background:#d6d6d6"></div>
<div class="t" style="left:-143.70px;width:300px;text-align:center;top:115.76px;font-size:8.2px;color:#444;">1</div>
<div class="ab" style="left:0px;top:146px;width:12px;height:1px;background:#d6d6d6"></div>
<div class="t" style="left:-143.70px;width:300px;text-align:center;top:139.06px;font-size:8.2px;color:#444;">2</div>
<div class="ab" style="left:0px;top:157px;width:12px;height:1px;background:#d6d6d6"></div>
<div class="t" style="left:-143.70px;width:300px;text-align:center;top:150.26px;font-size:8.2px;color:#444;">3</div>
<div class="ab" style="left:0px;top:169px;width:12px;height:1px;background:#d6d6d6"></div>
<div class="t" style="left:-143.70px;width:300px;text-align:center;top:161.26px;font-size:8.2px;color:#444;">4</div>
<div class="ab" style="left:0px;top:179px;width:12px;height:1px;background:#d6d6d6"></div>
<div class="t" style="left:-143.70px;width:300px;text-align:center;top:172.26px;font-size:8.2px;color:#444;">5</div>
<div class="ab" style="left:0px;top:190px;width:12px;height:1px;background:#d6d6d6"></div>
<div class="t" style="left:-143.70px;width:300px;text-align:center;top:183.16px;font-size:8.2px;color:#444;">6</div>
<div class="ab" style="left:0px;top:201px;width:12px;height:1px;background:#d6d6d6"></div>
<div class="t" style="left:-143.70px;width:300px;text-align:center;top:194.16px;font-size:8.2px;color:#444;">7</div>
<div class="ab" style="left:0px;top:212px;width:12px;height:1px;background:#d6d6d6"></div>
<div class="t" style="left:-143.70px;width:300px;text-align:center;top:205.06px;font-size:8.2px;color:#444;">8</div>
<div class="ab" style="left:0px;top:223px;width:12px;height:1px;background:#d6d6d6"></div>
<div class="t" style="left:-143.70px;width:300px;text-align:center;top:216.06px;font-size:8.2px;color:#444;">9</div>
<div class="ab" style="left:0px;top:234px;width:12px;height:1px;background:#d6d6d6"></div>
<div class="t" style="left:-143.70px;width:300px;text-align:center;top:227.16px;font-size:8.2px;color:#444;">10</div>
<div class="ab" style="left:0px;top:245px;width:12px;height:1px;background:#d6d6d6"></div>
<div class="t" style="left:-143.70px;width:300px;text-align:center;top:237.96px;font-size:8.2px;color:#444;">11</div>
<div class="ab" style="left:0px;top:254px;width:12px;height:1px;background:#d6d6d6"></div>
<div class="t" style="left:-143.70px;width:300px;text-align:center;top:246.96px;font-size:8.2px;color:#444;">12</div>
<div class="ab" style="left:0px;top:269px;width:12px;height:1px;background:#d6d6d6"></div>
<div class="t" style="left:-143.70px;width:300px;text-align:center;top:261.76px;font-size:8.2px;color:#444;">13</div>
<div class="ab" style="left:0px;top:282px;width:12px;height:1px;background:#d6d6d6"></div>
<div class="t" style="left:-143.70px;width:300px;text-align:center;top:274.76px;font-size:8.2px;color:#444;">14</div>
<div class="ab" style="left:0px;top:295px;width:12px;height:1px;background:#d6d6d6"></div>
<div class="t" style="left:-143.70px;width:300px;text-align:center;top:287.33px;font-size:8.2px;color:#444;">15</div>
<div class="ab" style="left:0px;top:307px;width:12px;height:1px;background:#d6d6d6"></div>
<div class="t" style="left:-143.70px;width:300px;text-align:center;top:299.90px;font-size:8.2px;color:#444;">16</div>
<div class="ab" style="left:0px;top:320px;width:12px;height:1px;background:#d6d6d6"></div>
<div class="t" style="left:-143.70px;width:300px;text-align:center;top:312.47px;font-size:8.2px;color:#444;">17</div>
<div class="ab" style="left:0px;top:332px;width:12px;height:1px;background:#d6d6d6"></div>
<div class="t" style="left:-143.70px;width:300px;text-align:center;top:325.04px;font-size:8.2px;color:#444;">18</div>
<div class="ab" style="left:0px;top:345px;width:12px;height:1px;background:#d6d6d6"></div>
<div class="t" style="left:-143.70px;width:300px;text-align:center;top:337.61px;font-size:8.2px;color:#444;">19</div>
<div class="ab" style="left:0px;top:357px;width:12px;height:1px;background:#d6d6d6"></div>
<div class="t" style="left:-143.70px;width:300px;text-align:center;top:350.18px;font-size:8.2px;color:#444;">20</div>
<div class="ab" style="left:0px;top:370px;width:12px;height:1px;background:#d6d6d6"></div>
<div class="t" style="left:-143.70px;width:300px;text-align:center;top:362.75px;font-size:8.2px;color:#444;">21</div>
<div class="ab" style="left:0px;top:383px;width:12px;height:1px;background:#d6d6d6"></div>
<div class="t" style="left:-143.70px;width:300px;text-align:center;top:375.32px;font-size:8.2px;color:#444;">22</div>
<div class="ab" style="left:0px;top:395px;width:12px;height:1px;background:#d6d6d6"></div>
<div class="t" style="left:-143.70px;width:300px;text-align:center;top:387.89px;font-size:8.2px;color:#444;">23</div>
<div class="ab" style="left:0px;top:408px;width:12px;height:1px;background:#d6d6d6"></div>
<div class="t" style="left:-143.70px;width:300px;text-align:center;top:400.46px;font-size:8.2px;color:#444;">24</div>
<div class="ab" style="left:0px;top:420px;width:12px;height:1px;background:#d6d6d6"></div>
<div class="t" style="left:-143.70px;width:300px;text-align:center;top:413.03px;font-size:8.2px;color:#444;">25</div>
<div class="ab" style="left:0px;top:433px;width:12px;height:1px;background:#d6d6d6"></div>
<div class="t" style="left:-143.70px;width:300px;text-align:center;top:425.60px;font-size:8.2px;color:#444;">26</div>
<div class="ab" style="left:0px;top:445px;width:12px;height:1px;background:#d6d6d6"></div>
<div class="t" style="left:-143.70px;width:300px;text-align:center;top:438.17px;font-size:8.2px;color:#444;">27</div>
<div class="ab" style="left:0px;top:458px;width:12px;height:1px;background:#d6d6d6"></div>
<div class="t" style="left:-143.70px;width:300px;text-align:center;top:450.74px;font-size:8.2px;color:#444;">28</div>
<div class="ab" style="left:0px;top:471px;width:12px;height:1px;background:#d6d6d6"></div>
<div class="t" style="left:-143.70px;width:300px;text-align:center;top:463.31px;font-size:8.2px;color:#444;">29</div>
<div class="t" style="left:-143.70px;width:300px;text-align:center;top:472.66px;font-size:8.2px;color:#444;">30</div>
<div class="t" style="left:24.90px;top:113.37px;font-size:9.6px;color:#444444;font-weight:bold;transform:scaleX(0.884);transform-origin:0 0;">Net Profit</div>
<div class="t" style="left:180.00px;top:115.24px;font-size:6.8px;color:#a8a8a8;transform:scaleX(0.904);transform-origin:0 0;">(Unit : 1,000 USD)</div>
<div class="t" style="left:263.40px;top:113.17px;font-size:9.6px;color:#444444;font-weight:bold;transform:scaleX(0.856);transform-origin:0 0;">Revenue Amount</div>
<div class="t" style="left:421.20px;top:115.24px;font-size:6.8px;color:#a8a8a8;transform:scaleX(0.896);transform-origin:0 0;">(Unit : 1,000 USD)</div>
<div class="t" style="left:497.60px;top:113.17px;font-size:9.6px;color:#444444;font-weight:bold;transform:scaleX(0.825);transform-origin:0 0;">Key Profitability Ratios</div>
<div class="t" style="left:25.20px;top:128.70px;font-size:15px;color:#2a2a2a;font-weight:bold;transform:scaleX(1.009);transform-origin:0 0;">0</div>
<div class="t" style="left:264.60px;top:128.70px;font-size:15px;color:#2a2a2a;font-weight:bold;transform:scaleX(1.009);transform-origin:0 0;">0</div>
<div class="ab" style="left:28px;top:222px;width:194px;height:1px;background:#ececec"></div>
<div class="ab" style="left:36px;top:221.5px;width:179px;height:1.3px;background:#f7b913"></div>
<div class="t" style="left:-113.90px;width:300px;text-align:center;top:226.98px;font-size:6.4px;color:#a0a8b8;transform:scaleX(0.9);">Jan</div>
<div class="t" style="left:-97.65px;width:300px;text-align:center;top:226.98px;font-size:6.4px;color:#a0a8b8;transform:scaleX(0.9);">Feb</div>
<div class="t" style="left:-81.40px;width:300px;text-align:center;top:226.98px;font-size:6.4px;color:#a0a8b8;transform:scaleX(0.9);">Mar</div>
<div class="t" style="left:-65.15px;width:300px;text-align:center;top:226.98px;font-size:6.4px;color:#a0a8b8;transform:scaleX(0.9);">Apr</div>
<div class="t" style="left:-48.90px;width:300px;text-align:center;top:226.98px;font-size:6.4px;color:#a0a8b8;transform:scaleX(0.9);">May</div>
<div class="t" style="left:-32.65px;width:300px;text-align:center;top:226.98px;font-size:6.4px;color:#a0a8b8;transform:scaleX(0.9);">Jun</div>
<div class="t" style="left:-16.40px;width:300px;text-align:center;top:226.98px;font-size:6.4px;color:#a0a8b8;transform:scaleX(0.9);">Jul</div>
<div class="t" style="left:-0.15px;width:300px;text-align:center;top:226.98px;font-size:6.4px;color:#a0a8b8;transform:scaleX(0.9);">Aug</div>
<div class="t" style="left:16.10px;width:300px;text-align:center;top:226.98px;font-size:6.4px;color:#a0a8b8;transform:scaleX(0.9);">Sep</div>
<div class="t" style="left:32.35px;width:300px;text-align:center;top:226.98px;font-size:6.4px;color:#a0a8b8;transform:scaleX(0.9);">Oct</div>
<div class="t" style="left:48.60px;width:300px;text-align:center;top:226.98px;font-size:6.4px;color:#a0a8b8;transform:scaleX(0.9);">Nov</div>
<div class="t" style="left:64.85px;width:300px;text-align:center;top:226.98px;font-size:6.4px;color:#a0a8b8;transform:scaleX(0.9);">Dec</div>
<svg style="left:0;top:0" width="813" height="504"><circle cx="36.10" cy="222.1" r="2.4" fill="#fff" stroke="#f7b913" stroke-width="1.1"/><circle cx="52.35" cy="222.1" r="2.4" fill="#fff" stroke="#f7b913" stroke-width="1.1"/><circle cx="68.60" cy="222.1" r="2.4" fill="#fff" stroke="#f7b913" stroke-width="1.1"/><circle cx="84.85" cy="222.1" r="2.4" fill="#fff" stroke="#f7b913" stroke-width="1.1"/><circle cx="101.10" cy="222.1" r="2.4" fill="#fff" stroke="#f7b913" stroke-width="1.1"/><circle cx="117.35" cy="222.1" r="2.4" fill="#fff" stroke="#f7b913" stroke-width="1.1"/><circle cx="133.60" cy="222.1" r="2.4" fill="#fff" stroke="#f7b913" stroke-width="1.1"/><circle cx="149.85" cy="222.1" r="2.4" fill="#fff" stroke="#f7b913" stroke-width="1.1"/><circle cx="166.10" cy="222.1" r="2.4" fill="#fff" stroke="#f7b913" stroke-width="1.1"/><circle cx="182.35" cy="222.1" r="2.4" fill="#fff" stroke="#f7b913" stroke-width="1.1"/><circle cx="198.60" cy="222.1" r="2.4" fill="#fff" stroke="#f7b913" stroke-width="1.1"/><circle cx="214.85" cy="222.1" r="2.4" fill="#fff" stroke="#f7b913" stroke-width="1.1"/><line x1="138.5" y1="243.3" x2="151.8" y2="243.3" stroke="#f7b913" stroke-width="1.1"/><circle cx="145.2" cy="243.3" r="2.2" fill="#fff" stroke="#f7b913" stroke-width="1.1"/></svg>
<div class="ab" style="left:58px;top:242px;width:12px;height:3px;background:#1e1e1e"></div>
<div class="t" style="left:71.50px;top:240.15px;font-size:6.2px;color:#4a4a4a;transform:scaleX(0.793);transform-origin:0 0;">Sales</div>
<div class="ab" style="left:92.4px;top:242px;width:12.6px;height:3px;background:#3a86e0"></div>
<div class="t" style="left:106.50px;top:240.15px;font-size:6.2px;color:#4a4a4a;transform:scaleX(0.832);transform-origin:0 0;">Net Profit</div>
<div class="t" style="left:153.00px;top:240.15px;font-size:6.2px;color:#4a4a4a;transform:scaleX(0.916);transform-origin:0 0;">Net Profit Margin</div>
<div class="ab" style="left:267px;top:222px;width:193px;height:1px;background:#ececec"></div>
<div class="t" style="left:125.00px;width:300px;text-align:center;top:226.98px;font-size:6.4px;color:#a0a8b8;transform:scaleX(0.9);">Jan</div>
<div class="t" style="left:141.02px;width:300px;text-align:center;top:226.98px;font-size:6.4px;color:#a0a8b8;transform:scaleX(0.9);">Feb</div>
<div class="t" style="left:157.04px;width:300px;text-align:center;top:226.98px;font-size:6.4px;color:#a0a8b8;transform:scaleX(0.9);">Mar</div>
<div class="t" style="left:173.06px;width:300px;text-align:center;top:226.98px;font-size:6.4px;color:#a0a8b8;transform:scaleX(0.9);">Apr</div>
<div class="t" style="left:189.08px;width:300px;text-align:center;top:226.98px;font-size:6.4px;color:#a0a8b8;transform:scaleX(0.9);">May</div>
<div class="t" style="left:205.10px;width:300px;text-align:center;top:226.98px;font-size:6.4px;color:#a0a8b8;transform:scaleX(0.9);">Jun</div>
<div class="t" style="left:221.12px;width:300px;text-align:center;top:226.98px;font-size:6.4px;color:#a0a8b8;transform:scaleX(0.9);">Jul</div>
<div class="t" style="left:237.14px;width:300px;text-align:center;top:226.98px;font-size:6.4px;color:#a0a8b8;transform:scaleX(0.9);">Aug</div>
<div class="t" style="left:253.16px;width:300px;text-align:center;top:226.98px;font-size:6.4px;color:#a0a8b8;transform:scaleX(0.9);">Sep</div>
<div class="t" style="left:269.18px;width:300px;text-align:center;top:226.98px;font-size:6.4px;color:#a0a8b8;transform:scaleX(0.9);">Oct</div>
<div class="t" style="left:285.20px;width:300px;text-align:center;top:226.98px;font-size:6.4px;color:#a0a8b8;transform:scaleX(0.9);">Nov</div>
<div class="t" style="left:301.22px;width:300px;text-align:center;top:226.98px;font-size:6.4px;color:#a0a8b8;transform:scaleX(0.9);">Dec</div>
<div class="ab" style="left:317.2px;top:241.5px;width:3.5px;height:3.5px;background:#2fc48d"></div>
<div class="t" style="left:322.00px;top:240.15px;font-size:6.2px;color:#4a4a4a;transform:scaleX(0.767);transform-origin:0 0;">COGS</div>
<div class="ab" style="left:342.4px;top:241.5px;width:3.2px;height:3.5px;background:#2f7de1"></div>
<div class="t" style="left:347.00px;top:240.15px;font-size:6.2px;color:#4a4a4a;transform:scaleX(0.743);transform-origin:0 0;">SG&amp;A</div>
<div class="ab" style="left:367.5px;top:241.5px;width:3.2px;height:3.5px;background:#1c2560"></div>
<div class="t" style="left:372.00px;top:240.15px;font-size:6.2px;color:#4a4a4a;transform:scaleX(0.917);transform-origin:0 0;">Operating Profit</div>
<div class="t" style="left:507.20px;top:218.06px;font-size:8.2px;color:#3d4250;font-weight:bold;transform:scaleX(0.907);transform-origin:0 0;">Gross Profit Margin</div>
<div class="t" style="left:600.20px;top:219.66px;font-size:8.2px;color:#3d4250;font-weight:bold;transform:scaleX(0.929);transform-origin:0 0;">Operating Profit Margin</div>
<div class="t" style="left:707.90px;top:219.26px;font-size:8.2px;color:#3d4250;font-weight:bold;transform:scaleX(0.945);transform-origin:0 0;">Net Profit Margin</div>
<div class="t" style="left:24.70px;top:256.82px;font-size:8.6px;color:#444444;font-weight:bold;transform:scaleX(0.952);transform-origin:0 0;">Monthly Details</div>
<div class="t" style="left:737.40px;top:259.24px;font-size:6.8px;color:#a8a8a8;transform:scaleX(0.907);transform-origin:0 0;">(Unit : 1,000 USD)</div>
<div class="ab" style="left:22.7px;top:269px;width:766.8px;height:1.2px;background:#5a72a4"></div>
<div class="ab" style="left:22.7px;top:270px;width:80.6px;height:13px;background:#8197c0"></div>
<div class="ab" style="left:103.3px;top:270px;width:686.2px;height:13px;background:#eef2f6"></div>
<div class="t" style="left:31.70px;top:272.81px;font-size:7.2px;color:#fff;transform:scaleX(0.934);transform-origin:0 0;">Category</div>
<div class="t" style="left:-19.92px;width:300px;text-align:center;top:272.67px;font-size:7.6px;color:#8c8c8c;transform:scaleX(0.95);">Jan</div>
<div class="t" style="left:32.84px;width:300px;text-align:center;top:272.67px;font-size:7.6px;color:#8c8c8c;transform:scaleX(0.95);">Feb</div>
<div class="t" style="left:85.60px;width:300px;text-align:center;top:272.67px;font-size:7.6px;color:#8c8c8c;transform:scaleX(0.95);">Mar</div>
<div class="t" style="left:138.36px;width:300px;text-align:center;top:272.67px;font-size:7.6px;color:#8c8c8c;transform:scaleX(0.95);">Apr</div>
<div class="t" style="left:191.12px;width:300px;text-align:center;top:272.67px;font-size:7.6px;color:#8c8c8c;transform:scaleX(0.95);">May</div>
<div class="t" style="left:243.88px;width:300px;text-align:center;top:272.67px;font-size:7.6px;color:#8c8c8c;transform:scaleX(0.95);">Jun</div>
<div class="t" style="left:296.64px;width:300px;text-align:center;top:272.67px;font-size:7.6px;color:#8c8c8c;transform:scaleX(0.95);">Jul</div>
<div class="t" style="left:349.40px;width:300px;text-align:center;top:272.67px;font-size:7.6px;color:#8c8c8c;transform:scaleX(0.95);">Aug</div>
<div class="t" style="left:402.16px;width:300px;text-align:center;top:272.67px;font-size:7.6px;color:#8c8c8c;transform:scaleX(0.95);">Sep</div>
<div class="t" style="left:454.92px;width:300px;text-align:center;top:272.67px;font-size:7.6px;color:#8c8c8c;transform:scaleX(0.95);">Oct</div>
<div class="t" style="left:507.68px;width:300px;text-align:center;top:272.67px;font-size:7.6px;color:#8c8c8c;transform:scaleX(0.95);">Nov</div>
<div class="t" style="left:560.44px;width:300px;text-align:center;top:272.67px;font-size:7.6px;color:#8c8c8c;transform:scaleX(0.95);">Dec</div>
<div class="t" style="left:613.20px;width:300px;text-align:center;top:272.67px;font-size:7.6px;color:#8c8c8c;transform:scaleX(0.95);">Total</div>
<div class="t" style="left:31.90px;top:285.81px;font-size:7.2px;color:#7c7c7c;transform:scaleX(0.874);transform-origin:0 0;">Revenue</div>
<div class="t" style="left:-151.84px;width:300px;text-align:right;top:285.50px;font-size:7.8px;color:#303030;font-weight:bold;transform:scaleX(0.95);transform-origin:100% 0;">0</div>
<div class="t" style="left:-99.08px;width:300px;text-align:right;top:285.50px;font-size:7.8px;color:#303030;font-weight:bold;transform:scaleX(0.95);transform-origin:100% 0;">0</div>
<div class="t" style="left:-46.32px;width:300px;text-align:right;top:285.50px;font-size:7.8px;color:#303030;font-weight:bold;transform:scaleX(0.95);transform-origin:100% 0;">0</div>
<div class="t" style="left:6.44px;width:300px;text-align:right;top:285.50px;font-size:7.8px;color:#303030;font-weight:bold;transform:scaleX(0.95);transform-origin:100% 0;">0</div>
<div class="t" style="left:59.20px;width:300px;text-align:right;top:285.50px;font-size:7.8px;color:#303030;font-weight:bold;transform:scaleX(0.95);transform-origin:100% 0;">0</div>
<div class="t" style="left:111.96px;width:300px;text-align:right;top:285.50px;font-size:7.8px;color:#303030;font-weight:bold;transform:scaleX(0.95);transform-origin:100% 0;">0</div>
<div class="t" style="left:164.72px;width:300px;text-align:right;top:285.50px;font-size:7.8px;color:#303030;font-weight:bold;transform:scaleX(0.95);transform-origin:100% 0;">0</div>
<div class="t" style="left:217.48px;width:300px;text-align:right;top:285.50px;font-size:7.8px;color:#303030;font-weight:bold;transform:scaleX(0.95);transform-origin:100% 0;">0</div>
<div class="t" style="left:270.24px;width:300px;text-align:right;top:285.50px;font-size:7.8px;color:#303030;font-weight:bold;transform:scaleX(0.95);transform-origin:100% 0;">0</div>
<div class="t" style="left:323.00px;width:300px;text-align:right;top:285.50px;font-size:7.8px;color:#303030;font-weight:bold;transform:scaleX(0.95);transform-origin:100% 0;">0</div>
<div class="t" style="left:375.76px;width:300px;text-align:right;top:285.50px;font-size:7.8px;color:#303030;font-weight:bold;transform:scaleX(0.95);transform-origin:100% 0;">0</div>
<div class="t" style="left:428.52px;width:300px;text-align:right;top:285.50px;font-size:7.8px;color:#303030;font-weight:bold;transform:scaleX(0.95);transform-origin:100% 0;">0</div>
<div class="t" style="left:481.28px;width:300px;text-align:right;top:285.50px;font-size:7.8px;color:#303030;font-weight:bold;transform:scaleX(0.95);transform-origin:100% 0;">0</div>
<div class="ab" style="left:22.7px;top:295px;width:766.8px;height:1px;background:#efefef"></div>
<div class="t" style="left:31.90px;top:298.38px;font-size:7.2px;color:#7c7c7c;transform:scaleX(0.857);transform-origin:0 0;">Expenses</div>
<div class="t" style="left:-151.84px;width:300px;text-align:right;top:298.07px;font-size:7.8px;color:#303030;font-weight:bold;transform:scaleX(0.95);transform-origin:100% 0;">0</div>
<div class="t" style="left:-99.08px;width:300px;text-align:right;top:298.07px;font-size:7.8px;color:#303030;font-weight:bold;transform:scaleX(0.95);transform-origin:100% 0;">0</div>
<div class="t" style="left:-46.32px;width:300px;text-align:right;top:298.07px;font-size:7.8px;color:#303030;font-weight:bold;transform:scaleX(0.95);transform-origin:100% 0;">0</div>
<div class="t" style="left:6.44px;width:300px;text-align:right;top:298.07px;font-size:7.8px;color:#303030;font-weight:bold;transform:scaleX(0.95);transform-origin:100% 0;">0</div>
<div class="t" style="left:59.20px;width:300px;text-align:right;top:298.07px;font-size:7.8px;color:#303030;font-weight:bold;transform:scaleX(0.95);transform-origin:100% 0;">0</div>
<div class="t" style="left:111.96px;width:300px;text-align:right;top:298.07px;font-size:7.8px;color:#303030;font-weight:bold;transform:scaleX(0.95);transform-origin:100% 0;">0</div>
<div class="t" style="left:164.72px;width:300px;text-align:right;top:298.07px;font-size:7.8px;color:#303030;font-weight:bold;transform:scaleX(0.95);transform-origin:100% 0;">0</div>
<div class="t" style="left:217.48px;width:300px;text-align:right;top:298.07px;font-size:7.8px;color:#303030;font-weight:bold;transform:scaleX(0.95);transform-origin:100% 0;">0</div>
<div class="t" style="left:270.24px;width:300px;text-align:right;top:298.07px;font-size:7.8px;color:#303030;font-weight:bold;transform:scaleX(0.95);transform-origin:100% 0;">0</div>
<div class="t" style="left:323.00px;width:300px;text-align:right;top:298.07px;font-size:7.8px;color:#303030;font-weight:bold;transform:scaleX(0.95);transform-origin:100% 0;">0</div>
<div class="t" style="left:375.76px;width:300px;text-align:right;top:298.07px;font-size:7.8px;color:#303030;font-weight:bold;transform:scaleX(0.95);transform-origin:100% 0;">0</div>
<div class="t" style="left:428.52px;width:300px;text-align:right;top:298.07px;font-size:7.8px;color:#303030;font-weight:bold;transform:scaleX(0.95);transform-origin:100% 0;">0</div>
<div class="t" style="left:481.28px;width:300px;text-align:right;top:298.07px;font-size:7.8px;color:#303030;font-weight:bold;transform:scaleX(0.95);transform-origin:100% 0;">0</div>
<div class="ab" style="left:22.7px;top:308px;width:766.8px;height:1px;background:#efefef"></div>
<div class="t" style="left:31.90px;top:310.95px;font-size:7.2px;color:#7c7c7c;transform:scaleX(0.810);transform-origin:0 0;">Sales</div>
<div class="ab" style="left:22.7px;top:320px;width:766.8px;height:1px;background:#efefef"></div>
<div class="t" style="left:31.90px;top:323.52px;font-size:7.2px;color:#7c7c7c;transform:scaleX(0.797);transform-origin:0 0;">COGS</div>
<div class="ab" style="left:22.7px;top:333px;width:766.8px;height:1px;background:#efefef"></div>
<div class="t" style="left:31.90px;top:336.09px;font-size:7.2px;color:#7c7c7c;transform:scaleX(0.921);transform-origin:0 0;">Gross Profit</div>
<div class="t" style="left:-151.84px;width:300px;text-align:right;top:335.78px;font-size:7.8px;color:#303030;font-weight:bold;transform:scaleX(0.95);transform-origin:100% 0;">0</div>
<div class="t" style="left:-99.08px;width:300px;text-align:right;top:335.78px;font-size:7.8px;color:#303030;font-weight:bold;transform:scaleX(0.95);transform-origin:100% 0;">0</div>
<div class="t" style="left:-46.32px;width:300px;text-align:right;top:335.78px;font-size:7.8px;color:#303030;font-weight:bold;transform:scaleX(0.95);transform-origin:100% 0;">0</div>
<div class="t" style="left:6.44px;width:300px;text-align:right;top:335.78px;font-size:7.8px;color:#303030;font-weight:bold;transform:scaleX(0.95);transform-origin:100% 0;">0</div>
<div class="t" style="left:59.20px;width:300px;text-align:right;top:335.78px;font-size:7.8px;color:#303030;font-weight:bold;transform:scaleX(0.95);transform-origin:100% 0;">0</div>
<div class="t" style="left:111.96px;width:300px;text-align:right;top:335.78px;font-size:7.8px;color:#303030;font-weight:bold;transform:scaleX(0.95);transform-origin:100% 0;">0</div>
<div class="t" style="left:164.72px;width:300px;text-align:right;top:335.78px;font-size:7.8px;color:#303030;font-weight:bold;transform:scaleX(0.95);transform-origin:100% 0;">0</div>
<div class="t" style="left:217.48px;width:300px;text-align:right;top:335.78px;font-size:7.8px;color:#303030;font-weight:bold;transform:scaleX(0.95);transform-origin:100% 0;">0</div>
<div class="t" style="left:270.24px;width:300px;text-align:right;top:335.78px;font-size:7.8px;color:#303030;font-weight:bold;transform:scaleX(0.95);transform-origin:100% 0;">0</div>
<div class="t" style="left:323.00px;width:300px;text-align:right;top:335.78px;font-size:7.8px;color:#303030;font-weight:bold;transform:scaleX(0.95);transform-origin:100% 0;">0</div>
<div class="t" style="left:375.76px;width:300px;text-align:right;top:335.78px;font-size:7.8px;color:#303030;font-weight:bold;transform:scaleX(0.95);transform-origin:100% 0;">0</div>
<div class="t" style="left:428.52px;width:300px;text-align:right;top:335.78px;font-size:7.8px;color:#303030;font-weight:bold;transform:scaleX(0.95);transform-origin:100% 0;">0</div>
<div class="t" style="left:481.28px;width:300px;text-align:right;top:335.78px;font-size:7.8px;color:#303030;font-weight:bold;transform:scaleX(0.95);transform-origin:100% 0;">0</div>
<div class="ab" style="left:22.7px;top:345px;width:766.8px;height:1px;background:#efefef"></div>
<div class="ab" style="left:22.7px;top:345.85px;width:766.8px;height:13.1px;background:#ecf3fd"></div>
<div class="t" style="left:24.40px;top:348.66px;font-size:7.2px;color:#2c3380;font-weight:bold;transform:scaleX(0.921);transform-origin:0 0;">Gross Profit Margin</div>
<div class="t" style="left:31.90px;top:361.23px;font-size:7.2px;color:#7c7c7c;transform:scaleX(0.894);transform-origin:0 0;">SG&amp;A</div>
<div class="t" style="left:-152.24px;width:300px;text-align:right;top:360.92px;font-size:7.8px;color:#a0a0a0;transform:scaleX(0.95);transform-origin:100% 0;">0</div>
<div class="t" style="left:-99.48px;width:300px;text-align:right;top:360.92px;font-size:7.8px;color:#a0a0a0;transform:scaleX(0.95);transform-origin:100% 0;">0</div>
<div class="t" style="left:-46.72px;width:300px;text-align:right;top:360.92px;font-size:7.8px;color:#a0a0a0;transform:scaleX(0.95);transform-origin:100% 0;">0</div>
<div class="t" style="left:6.04px;width:300px;text-align:right;top:360.92px;font-size:7.8px;color:#a0a0a0;transform:scaleX(0.95);transform-origin:100% 0;">0</div>
<div class="t" style="left:58.80px;width:300px;text-align:right;top:360.92px;font-size:7.8px;color:#a0a0a0;transform:scaleX(0.95);transform-origin:100% 0;">0</div>
<div class="t" style="left:111.56px;width:300px;text-align:right;top:360.92px;font-size:7.8px;color:#a0a0a0;transform:scaleX(0.95);transform-origin:100% 0;">0</div>
<div class="t" style="left:164.32px;width:300px;text-align:right;top:360.92px;font-size:7.8px;color:#a0a0a0;transform:scaleX(0.95);transform-origin:100% 0;">0</div>
<div class="t" style="left:217.08px;width:300px;text-align:right;top:360.92px;font-size:7.8px;color:#a0a0a0;transform:scaleX(0.95);transform-origin:100% 0;">0</div>
<div class="t" style="left:269.84px;width:300px;text-align:right;top:360.92px;font-size:7.8px;color:#a0a0a0;transform:scaleX(0.95);transform-origin:100% 0;">0</div>
<div class="t" style="left:322.60px;width:300px;text-align:right;top:360.92px;font-size:7.8px;color:#a0a0a0;transform:scaleX(0.95);transform-origin:100% 0;">0</div>
<div class="t" style="left:375.36px;width:300px;text-align:right;top:360.92px;font-size:7.8px;color:#a0a0a0;transform:scaleX(0.95);transform-origin:100% 0;">0</div>
<div class="t" style="left:428.12px;width:300px;text-align:right;top:360.92px;font-size:7.8px;color:#a0a0a0;transform:scaleX(0.95);transform-origin:100% 0;">0</div>
<div class="t" style="left:480.88px;width:300px;text-align:right;top:360.92px;font-size:7.8px;color:#a0a0a0;transform:scaleX(0.95);transform-origin:100% 0;">0</div>
<div class="ab" style="left:22.7px;top:370px;width:766.8px;height:1px;background:#efefef"></div>
<div class="t" style="left:31.90px;top:373.80px;font-size:7.2px;color:#7c7c7c;transform:scaleX(0.950);transform-origin:0 0;">Operating Profit</div>
<div class="t" style="left:-151.84px;width:300px;text-align:right;top:373.49px;font-size:7.8px;color:#303030;font-weight:bold;transform:scaleX(0.95);transform-origin:100% 0;">0</div>
<div class="t" style="left:-99.08px;width:300px;text-align:right;top:373.49px;font-size:7.8px;color:#303030;font-weight:bold;transform:scaleX(0.95);transform-origin:100% 0;">0</div>
<div class="t" style="left:-46.32px;width:300px;text-align:right;top:373.49px;font-size:7.8px;color:#303030;font-weight:bold;transform:scaleX(0.95);transform-origin:100% 0;">0</div>
<div class="t" style="left:6.44px;width:300px;text-align:right;top:373.49px;font-size:7.8px;color:#303030;font-weight:bold;transform:scaleX(0.95);transform-origin:100% 0;">0</div>
<div class="t" style="left:59.20px;width:300px;text-align:right;top:373.49px;font-size:7.8px;color:#303030;font-weight:bold;transform:scaleX(0.95);transform-origin:100% 0;">0</div>
<div class="t" style="left:111.96px;width:300px;text-align:right;top:373.49px;font-size:7.8px;color:#303030;font-weight:bold;transform:scaleX(0.95);transform-origin:100% 0;">0</div>
<div class="t" style="left:164.72px;width:300px;text-align:right;top:373.49px;font-size:7.8px;color:#303030;font-weight:bold;transform:scaleX(0.95);transform-origin:100% 0;">0</div>
<div class="t" style="left:217.48px;width:300px;text-align:right;top:373.49px;font-size:7.8px;color:#303030;font-weight:bold;transform:scaleX(0.95);transform-origin:100% 0;">0</div>
<div class="t" style="left:270.24px;width:300px;text-align:right;top:373.49px;font-size:7.8px;color:#303030;font-weight:bold;transform:scaleX(0.95);transform-origin:100% 0;">0</div>
<div class="t" style="left:323.00px;width:300px;text-align:right;top:373.49px;font-size:7.8px;color:#303030;font-weight:bold;transform:scaleX(0.95);transform-origin:100% 0;">0</div>
<div class="t" style="left:375.76px;width:300px;text-align:right;top:373.49px;font-size:7.8px;color:#303030;font-weight:bold;transform:scaleX(0.95);transform-origin:100% 0;">0</div>
<div class="t" style="left:428.52px;width:300px;text-align:right;top:373.49px;font-size:7.8px;color:#303030;font-weight:bold;transform:scaleX(0.95);transform-origin:100% 0;">0</div>
<div class="t" style="left:481.28px;width:300px;text-align:right;top:373.49px;font-size:7.8px;color:#303030;font-weight:bold;transform:scaleX(0.95);transform-origin:100% 0;">0</div>
<div class="ab" style="left:22.7px;top:383px;width:766.8px;height:1px;background:#efefef"></div>
<div class="ab" style="left:22.7px;top:383.56px;width:766.8px;height:13.1px;background:#ecf3fd"></div>
<div class="t" style="left:24.40px;top:386.37px;font-size:7.2px;color:#2c3380;font-weight:bold;transform:scaleX(0.940);transform-origin:0 0;">Operating Profit Margin</div>
<div class="t" style="left:31.90px;top:398.94px;font-size:7.2px;color:#7c7c7c;transform:scaleX(0.964);transform-origin:0 0;">Non-operating Income</div>
<div class="t" style="left:-152.24px;width:300px;text-align:right;top:398.63px;font-size:7.8px;color:#a0a0a0;transform:scaleX(0.95);transform-origin:100% 0;">0</div>
<div class="t" style="left:-99.48px;width:300px;text-align:right;top:398.63px;font-size:7.8px;color:#a0a0a0;transform:scaleX(0.95);transform-origin:100% 0;">0</div>
<div class="t" style="left:-46.72px;width:300px;text-align:right;top:398.63px;font-size:7.8px;color:#a0a0a0;transform:scaleX(0.95);transform-origin:100% 0;">0</div>
<div class="t" style="left:6.04px;width:300px;text-align:right;top:398.63px;font-size:7.8px;color:#a0a0a0;transform:scaleX(0.95);transform-origin:100% 0;">0</div>
<div class="t" style="left:58.80px;width:300px;text-align:right;top:398.63px;font-size:7.8px;color:#a0a0a0;transform:scaleX(0.95);transform-origin:100% 0;">0</div>
<div class="t" style="left:111.56px;width:300px;text-align:right;top:398.63px;font-size:7.8px;color:#a0a0a0;transform:scaleX(0.95);transform-origin:100% 0;">0</div>
<div class="t" style="left:164.32px;width:300px;text-align:right;top:398.63px;font-size:7.8px;color:#a0a0a0;transform:scaleX(0.95);transform-origin:100% 0;">0</div>
<div class="t" style="left:217.08px;width:300px;text-align:right;top:398.63px;font-size:7.8px;color:#a0a0a0;transform:scaleX(0.95);transform-origin:100% 0;">0</div>
<div class="t" style="left:269.84px;width:300px;text-align:right;top:398.63px;font-size:7.8px;color:#a0a0a0;transform:scaleX(0.95);transform-origin:100% 0;">0</div>
<div class="t" style="left:322.60px;width:300px;text-align:right;top:398.63px;font-size:7.8px;color:#a0a0a0;transform:scaleX(0.95);transform-origin:100% 0;">0</div>
<div class="t" style="left:375.36px;width:300px;text-align:right;top:398.63px;font-size:7.8px;color:#a0a0a0;transform:scaleX(0.95);transform-origin:100% 0;">0</div>
<div class="t" style="left:428.12px;width:300px;text-align:right;top:398.63px;font-size:7.8px;color:#a0a0a0;transform:scaleX(0.95);transform-origin:100% 0;">0</div>
<div class="t" style="left:480.88px;width:300px;text-align:right;top:398.63px;font-size:7.8px;color:#a0a0a0;transform:scaleX(0.95);transform-origin:100% 0;">0</div>
<div class="ab" style="left:22.7px;top:408px;width:766.8px;height:1px;background:#efefef"></div>
<div class="t" style="left:31.90px;top:411.51px;font-size:7.2px;color:#7c7c7c;transform:scaleX(0.941);transform-origin:0 0;">Non-operating Expense</div>
<div class="t" style="left:-152.24px;width:300px;text-align:right;top:411.20px;font-size:7.8px;color:#a0a0a0;transform:scaleX(0.95);transform-origin:100% 0;">0</div>
<div class="t" style="left:-99.48px;width:300px;text-align:right;top:411.20px;font-size:7.8px;color:#a0a0a0;transform:scaleX(0.95);transform-origin:100% 0;">0</div>
<div class="t" style="left:-46.72px;width:300px;text-align:right;top:411.20px;font-size:7.8px;color:#a0a0a0;transform:scaleX(0.95);transform-origin:100% 0;">0</div>
<div class="t" style="left:6.04px;width:300px;text-align:right;top:411.20px;font-size:7.8px;color:#a0a0a0;transform:scaleX(0.95);transform-origin:100% 0;">0</div>
<div class="t" style="left:58.80px;width:300px;text-align:right;top:411.20px;font-size:7.8px;color:#a0a0a0;transform:scaleX(0.95);transform-origin:100% 0;">0</div>
<div class="t" style="left:111.56px;width:300px;text-align:right;top:411.20px;font-size:7.8px;color:#a0a0a0;transform:scaleX(0.95);transform-origin:100% 0;">0</div>
<div class="t" style="left:164.32px;width:300px;text-align:right;top:411.20px;font-size:7.8px;color:#a0a0a0;transform:scaleX(0.95);transform-origin:100% 0;">0</div>
<div class="t" style="left:217.08px;width:300px;text-align:right;top:411.20px;font-size:7.8px;color:#a0a0a0;transform:scaleX(0.95);transform-origin:100% 0;">0</div>
<div class="t" style="left:269.84px;width:300px;text-align:right;top:411.20px;font-size:7.8px;color:#a0a0a0;transform:scaleX(0.95);transform-origin:100% 0;">0</div>
<div class="t" style="left:322.60px;width:300px;text-align:right;top:411.20px;font-size:7.8px;color:#a0a0a0;transform:scaleX(0.95);transform-origin:100% 0;">0</div>
<div class="t" style="left:375.36px;width:300px;text-align:right;top:411.20px;font-size:7.8px;color:#a0a0a0;transform:scaleX(0.95);transform-origin:100% 0;">0</div>
<div class="t" style="left:428.12px;width:300px;text-align:right;top:411.20px;font-size:7.8px;color:#a0a0a0;transform:scaleX(0.95);transform-origin:100% 0;">0</div>
<div class="t" style="left:480.88px;width:300px;text-align:right;top:411.20px;font-size:7.8px;color:#a0a0a0;transform:scaleX(0.95);transform-origin:100% 0;">0</div>
<div class="ab" style="left:22.7px;top:421px;width:766.8px;height:1px;background:#efefef"></div>
<div class="t" style="left:31.90px;top:424.08px;font-size:7.2px;color:#7c7c7c;transform:scaleX(0.757);transform-origin:0 0;">EBT</div>
<div class="t" style="left:-151.84px;width:300px;text-align:right;top:423.77px;font-size:7.8px;color:#303030;font-weight:bold;transform:scaleX(0.95);transform-origin:100% 0;">0</div>
<div class="t" style="left:-99.08px;width:300px;text-align:right;top:423.77px;font-size:7.8px;color:#303030;font-weight:bold;transform:scaleX(0.95);transform-origin:100% 0;">0</div>
<div class="t" style="left:-46.32px;width:300px;text-align:right;top:423.77px;font-size:7.8px;color:#303030;font-weight:bold;transform:scaleX(0.95);transform-origin:100% 0;">0</div>
<div class="t" style="left:6.44px;width:300px;text-align:right;top:423.77px;font-size:7.8px;color:#303030;font-weight:bold;transform:scaleX(0.95);transform-origin:100% 0;">0</div>
<div class="t" style="left:59.20px;width:300px;text-align:right;top:423.77px;font-size:7.8px;color:#303030;font-weight:bold;transform:scaleX(0.95);transform-origin:100% 0;">0</div>
<div class="t" style="left:111.96px;width:300px;text-align:right;top:423.77px;font-size:7.8px;color:#303030;font-weight:bold;transform:scaleX(0.95);transform-origin:100% 0;">0</div>
<div class="t" style="left:164.72px;width:300px;text-align:right;top:423.77px;font-size:7.8px;color:#303030;font-weight:bold;transform:scaleX(0.95);transform-origin:100% 0;">0</div>
<div class="t" style="left:217.48px;width:300px;text-align:right;top:423.77px;font-size:7.8px;color:#303030;font-weight:bold;transform:scaleX(0.95);transform-origin:100% 0;">0</div>
<div class="t" style="left:270.24px;width:300px;text-align:right;top:423.77px;font-size:7.8px;color:#303030;font-weight:bold;transform:scaleX(0.95);transform-origin:100% 0;">0</div>
<div class="t" style="left:323.00px;width:300px;text-align:right;top:423.77px;font-size:7.8px;color:#303030;font-weight:bold;transform:scaleX(0.95);transform-origin:100% 0;">0</div>
<div class="t" style="left:375.76px;width:300px;text-align:right;top:423.77px;font-size:7.8px;color:#303030;font-weight:bold;transform:scaleX(0.95);transform-origin:100% 0;">0</div>
<div class="t" style="left:428.52px;width:300px;text-align:right;top:423.77px;font-size:7.8px;color:#303030;font-weight:bold;transform:scaleX(0.95);transform-origin:100% 0;">0</div>
<div class="t" style="left:481.28px;width:300px;text-align:right;top:423.77px;font-size:7.8px;color:#303030;font-weight:bold;transform:scaleX(0.95);transform-origin:100% 0;">0</div>
<div class="ab" style="left:22.7px;top:433px;width:766.8px;height:1px;background:#efefef"></div>
<div class="t" style="left:31.90px;top:436.65px;font-size:7.2px;color:#7c7c7c;transform:scaleX(0.917);transform-origin:0 0;">Income Tax Expense</div>
<div class="t" style="left:-152.24px;width:300px;text-align:right;top:436.34px;font-size:7.8px;color:#a0a0a0;transform:scaleX(0.95);transform-origin:100% 0;">0</div>
<div class="t" style="left:-99.48px;width:300px;text-align:right;top:436.34px;font-size:7.8px;color:#a0a0a0;transform:scaleX(0.95);transform-origin:100% 0;">0</div>
<div class="t" style="left:-46.72px;width:300px;text-align:right;top:436.34px;font-size:7.8px;color:#a0a0a0;transform:scaleX(0.95);transform-origin:100% 0;">0</div>
<div class="t" style="left:6.04px;width:300px;text-align:right;top:436.34px;font-size:7.8px;color:#a0a0a0;transform:scaleX(0.95);transform-origin:100% 0;">0</div>
<div class="t" style="left:58.80px;width:300px;text-align:right;top:436.34px;font-size:7.8px;color:#a0a0a0;transform:scaleX(0.95);transform-origin:100% 0;">0</div>
<div class="t" style="left:111.56px;width:300px;text-align:right;top:436.34px;font-size:7.8px;color:#a0a0a0;transform:scaleX(0.95);transform-origin:100% 0;">0</div>
<div class="t" style="left:164.32px;width:300px;text-align:right;top:436.34px;font-size:7.8px;color:#a0a0a0;transform:scaleX(0.95);transform-origin:100% 0;">0</div>
<div class="t" style="left:217.08px;width:300px;text-align:right;top:436.34px;font-size:7.8px;color:#a0a0a0;transform:scaleX(0.95);transform-origin:100% 0;">0</div>
<div class="t" style="left:269.84px;width:300px;text-align:right;top:436.34px;font-size:7.8px;color:#a0a0a0;transform:scaleX(0.95);transform-origin:100% 0;">0</div>
<div class="t" style="left:322.60px;width:300px;text-align:right;top:436.34px;font-size:7.8px;color:#a0a0a0;transform:scaleX(0.95);transform-origin:100% 0;">0</div>
<div class="t" style="left:375.36px;width:300px;text-align:right;top:436.34px;font-size:7.8px;color:#a0a0a0;transform:scaleX(0.95);transform-origin:100% 0;">0</div>
<div class="t" style="left:428.12px;width:300px;text-align:right;top:436.34px;font-size:7.8px;color:#a0a0a0;transform:scaleX(0.95);transform-origin:100% 0;">0</div>
<div class="t" style="left:480.88px;width:300px;text-align:right;top:436.34px;font-size:7.8px;color:#a0a0a0;transform:scaleX(0.95);transform-origin:100% 0;">0</div>
<div class="ab" style="left:22.7px;top:446px;width:766.8px;height:1px;background:#efefef"></div>
<div class="t" style="left:31.90px;top:449.22px;font-size:7.2px;color:#7c7c7c;transform:scaleX(0.946);transform-origin:0 0;">Net Profit</div>
<div class="t" style="left:-151.84px;width:300px;text-align:right;top:448.91px;font-size:7.8px;color:#303030;font-weight:bold;transform:scaleX(0.95);transform-origin:100% 0;">0</div>
<div class="t" style="left:-99.08px;width:300px;text-align:right;top:448.91px;font-size:7.8px;color:#303030;font-weight:bold;transform:scaleX(0.95);transform-origin:100% 0;">0</div>
<div class="t" style="left:-46.32px;width:300px;text-align:right;top:448.91px;font-size:7.8px;color:#303030;font-weight:bold;transform:scaleX(0.95);transform-origin:100% 0;">0</div>
<div class="t" style="left:6.44px;width:300px;text-align:right;top:448.91px;font-size:7.8px;color:#303030;font-weight:bold;transform:scaleX(0.95);transform-origin:100% 0;">0</div>
<div class="t" style="left:59.20px;width:300px;text-align:right;top:448.91px;font-size:7.8px;color:#303030;font-weight:bold;transform:scaleX(0.95);transform-origin:100% 0;">0</div>
<div class="t" style="left:111.96px;width:300px;text-align:right;top:448.91px;font-size:7.8px;color:#303030;font-weight:bold;transform:scaleX(0.95);transform-origin:100% 0;">0</div>
<div class="t" style="left:164.72px;width:300px;text-align:right;top:448.91px;font-size:7.8px;color:#303030;font-weight:bold;transform:scaleX(0.95);transform-origin:100% 0;">0</div>
<div class="t" style="left:217.48px;width:300px;text-align:right;top:448.91px;font-size:7.8px;color:#303030;font-weight:bold;transform:scaleX(0.95);transform-origin:100% 0;">0</div>
<div class="t" style="left:270.24px;width:300px;text-align:right;top:448.91px;font-size:7.8px;color:#303030;font-weight:bold;transform:scaleX(0.95);transform-origin:100% 0;">0</div>
<div class="t" style="left:323.00px;width:300px;text-align:right;top:448.91px;font-size:7.8px;color:#303030;font-weight:bold;transform:scaleX(0.95);transform-origin:100% 0;">0</div>
<div class="t" style="left:375.76px;width:300px;text-align:right;top:448.91px;font-size:7.8px;color:#303030;font-weight:bold;transform:scaleX(0.95);transform-origin:100% 0;">0</div>
<div class="t" style="left:428.52px;width:300px;text-align:right;top:448.91px;font-size:7.8px;color:#303030;font-weight:bold;transform:scaleX(0.95);transform-origin:100% 0;">0</div>
<div class="t" style="left:481.28px;width:300px;text-align:right;top:448.91px;font-size:7.8px;color:#303030;font-weight:bold;transform:scaleX(0.95);transform-origin:100% 0;">0</div>
<div class="ab" style="left:22.7px;top:458px;width:766.8px;height:1px;background:#efefef"></div>
<div class="ab" style="left:22.7px;top:458.98px;width:766.8px;height:13.1px;background:#ecf3fd"></div>
<div class="t" style="left:24.40px;top:461.79px;font-size:7.2px;color:#2c3380;font-weight:bold;transform:scaleX(0.964);transform-origin:0 0;">Net Profit Margin</div>
<div class="ab" style="left:103.3px;top:283px;width:1px;height:188.55px;background:#e8e8f2"></div>
<div class="ab" style="left:0px;top:479px;width:813px;height:14px;background:#e6e6e6;border-top:1px solid #c6c6c6"></div>
<div class="ab" style="left:49px;top:479px;width:63px;height:13px;background:#fff"></div>
<div class="ab" style="left:49px;top:490.8px;width:63px;height:1.3px;background:#217346"></div>
<div class="t" style="left:-69.50px;width:300px;text-align:center;top:483.34px;font-size:6.8px;color:#217346;letter-spacing:-0.1px;">V_ProfitAndLoss</div>
<div class="t" style="left:-29.20px;width:300px;text-align:center;top:483.34px;font-size:6.8px;color:#444;">D1</div>
<div class="ab" style="left:133px;top:482px;width:1px;height:8px;background:#bdbdbd"></div>
<div class="t" style="left:-9.00px;width:300px;text-align:center;top:483.34px;font-size:6.8px;color:#444;">P1</div>
<div class="ab" style="left:152px;top:482px;width:1px;height:8px;background:#bdbdbd"></div>
<svg style="left:0;top:0" width="813" height="504"><circle cx="172" cy="486" r="3.6" fill="none" stroke="#666" stroke-width="0.8"/><line x1="170" y1="486" x2="174" y2="486" stroke="#666" stroke-width="0.8"/><line x1="172" y1="484" x2="172" y2="488" stroke="#666" stroke-width="0.8"/><polyline points="13.5,484.5 12,486 13.5,487.5" fill="none" stroke="#c0c0c0" stroke-width="0.8"/><polyline points="26.5,484.5 28,486 26.5,487.5" fill="none" stroke="#c0c0c0" stroke-width="0.8"/></svg>
<div class="ab" style="left:488px;top:483px;width:1px;height:1px;background:#a8a8a8"></div>
<div class="ab" style="left:488px;top:485.5px;width:1px;height:1px;background:#a8a8a8"></div>
<div class="ab" style="left:488px;top:488px;width:1px;height:1px;background:#a8a8a8"></div>
<div class="ab" style="left:496.5px;top:483px;width:310px;height:7.5px;background:#fff;border:1px solid #c8c8c8"></div>
<div class="ab" style="left:710px;top:483.5px;width:87.5px;height:6.5px;background:#e6e6e6"></div>
<div class="ab" style="left:503.5px;top:483px;width:1px;height:7.5px;background:#c8c8c8"></div>
<div class="ab" style="left:797px;top:483px;width:1px;height:7.5px;background:#c8c8c8"></div>
<svg style="left:0;top:0" width="813" height="504"><polygon points="501.5,484.5 499.3,486.7 501.5,488.9" fill="#444"/><polygon points="800.5,484.5 802.7,486.7 800.5,488.9" fill="#444"/></svg>
<div class="ab" style="left:0px;top:493px;width:813px;height:11px;background:#f3f3f3"></div>
<div class="ab" style="left:0px;top:492.6px;width:813px;height:0.8px;background:#d2d2d2"></div>
<div class="t" style="left:2.00px;top:495.21px;font-size:7.2px;color:#333;transform:scaleX(0.755);transform-origin:0 0;">Ready</div>
<div class="ab" style="left:665px;top:493px;width:19px;height:11px;background:#d4d4d4"></div>
<svg style="left:0;top:0" width="813" height="504"><rect x="669.5" y="495.5" width="8" height="6" fill="none" stroke="#777" stroke-width="0.8"/><line x1="669.5" y1="497.5" x2="677.5" y2="497.5" stroke="#777" stroke-width="0.6"/><line x1="669.5" y1="499.5" x2="677.5" y2="499.5" stroke="#777" stroke-width="0.6"/><line x1="672.2" y1="495.5" x2="672.2" y2="501.5" stroke="#777" stroke-width="0.6"/><line x1="674.8" y1="495.5" x2="674.8" y2="501.5" stroke="#777" stroke-width="0.6"/><rect x="689.5" y="495.5" width="8" height="6" fill="none" stroke="#999" stroke-width="0.8"/><rect x="708.5" y="495.5" width="7" height="6" fill="none" stroke="#777" stroke-width="0.8"/><rect x="28" y="495.8" width="6.2" height="5.6" fill="#fff" stroke="#666" stroke-width="0.8"/><rect x="28" y="495.5" width="6.2" height="1.5" fill="#555"/><line x1="724" y1="498.5" x2="727" y2="498.5" stroke="#555" stroke-width="0.9"/><line x1="729" y1="498.5" x2="780" y2="498.5" stroke="#b0b0b0" stroke-width="0.7"/><rect x="753.8" y="495.5" width="2" height="6" fill="#555"/><line x1="781.5" y1="498.5" x2="785.5" y2="498.5" stroke="#555" stroke-width="0.9"/><line x1="783.5" y1="496.5" x2="783.5" y2="500.5" stroke="#555" stroke-width="0.9"/></svg>
<div class="t" style="left:791.00px;top:496.67px;font-size:6.3px;color:#444;letter-spacing:-0.1px;">100%</div>
</body></html>
